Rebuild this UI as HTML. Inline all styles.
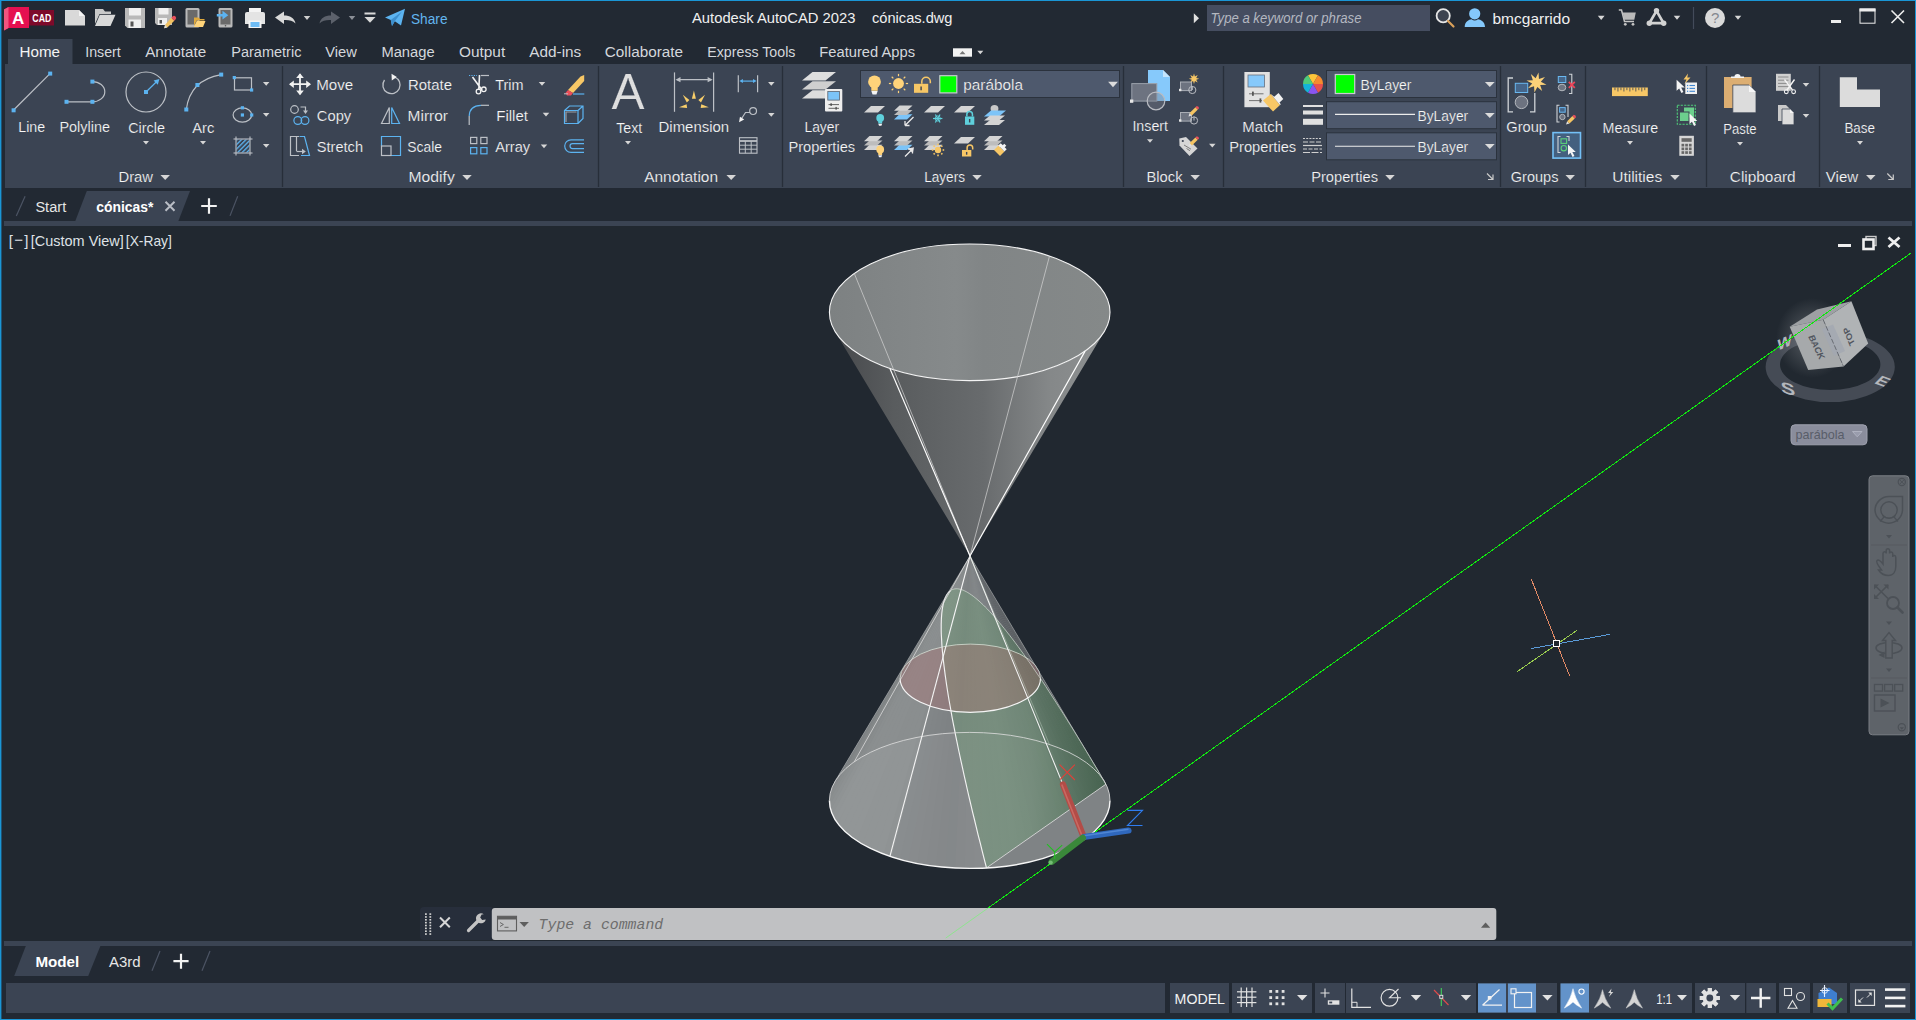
<!DOCTYPE html>
<html><head><meta charset="utf-8"><title>Autodesk AutoCAD 2023 - cónicas.dwg</title>
<style>
html,body{margin:0;padding:0;background:#222933;overflow:hidden}
body{width:1916px;height:1020px;position:relative}
svg{position:absolute;left:0;top:0;display:block}
text{font-family:"Liberation Sans",sans-serif;white-space:pre}
</style></head><body>
<svg width="1916" height="1020" viewBox="0 0 1916 1020">
<rect x="0" y="0" width="1916" height="1020" fill="#222933" />
<rect x="8" y="39" width="64.5" height="26" fill="#3b4453" />
<rect x="5" y="64" width="1906" height="124" fill="#3b4453" />
<line x1="282.5" y1="66" x2="282.5" y2="187" stroke="#272e39" stroke-width="1.3" />
<line x1="598.5" y1="66" x2="598.5" y2="187" stroke="#272e39" stroke-width="1.3" />
<line x1="782.5" y1="66" x2="782.5" y2="187" stroke="#272e39" stroke-width="1.3" />
<line x1="1123.5" y1="66" x2="1123.5" y2="187" stroke="#272e39" stroke-width="1.3" />
<line x1="1223.5" y1="66" x2="1223.5" y2="187" stroke="#272e39" stroke-width="1.3" />
<line x1="1500.5" y1="66" x2="1500.5" y2="187" stroke="#272e39" stroke-width="1.3" />
<line x1="1585.5" y1="66" x2="1585.5" y2="187" stroke="#272e39" stroke-width="1.3" />
<line x1="1706.5" y1="66" x2="1706.5" y2="187" stroke="#272e39" stroke-width="1.3" />
<line x1="1819.5" y1="66" x2="1819.5" y2="187" stroke="#272e39" stroke-width="1.3" />
<rect x="4" y="221" width="1908" height="5" fill="#3b4453" />
<path d="M86.8 191H190L178.4 221H75.3z" fill="#3b4453" />
<rect x="2" y="226" width="1913" height="715" fill="#212830" />
<rect x="4" y="941" width="1908" height="5" fill="#3b4453" />
<path d="M25.8 946H100.4L88.2 976H14.2z" fill="#3b4453" />
<rect x="6" y="983" width="1159" height="30" fill="#3b4453" />
<rect x="0" y="0" width="1916" height="1" fill="#1a96d6" />
<rect x="0" y="0" width="1.4" height="1020" fill="#1a96d6" />
<rect x="1915" y="0" width="1" height="1020" fill="#1a96d6" />
<rect x="0" y="1019" width="1916" height="1" fill="#1a96d6" />
<path d="M4 9.5L8.5 7H29V28H8.5L4 30.5z" fill="#e51050" />
<path d="M4 9.5L8.5 7V28L4 30.5z" fill="#f0557f" />
<rect x="29" y="10" width="25" height="15.5" fill="#7d0a2a" />
<text x="12" y="24.3" font-size="17" fill="#fff" font-weight="bold" >A</text>
<text x="32.3" y="21.8" font-size="10" fill="#fff" font-weight="bold" textLength="19.0" lengthAdjust="spacingAndGlyphs" >CAD</text>
<path d="M65 10H79L85 16V25.5H65z" fill="#d9d9d9" />
<path d="M79 10V16H85z" fill="#f4f4f4" />
<path d="M95 9H103L105 11.5H111V14H99.5L95 24z" fill="#c9c9c9" />
<path d="M99.8 14.8H115.5L110.5 26H95z" fill="#d9d9d9" />
<path d="M125 8H145V28H127.5L125 25.5z" fill="#b9b9b9" />
<rect x="129" y="8" width="12" height="7.5" fill="#f0f0f0" />
<rect x="128.5" y="19.5" width="12.5" height="8.5" fill="#f0f0f0" />
<rect x="130.5" y="21.5" width="3" height="5" fill="#555" />
<path d="M155 8H172V25H157L155 23z" fill="#b9b9b9" />
<rect x="158.5" y="8" width="10" height="6.5" fill="#f0f0f0" />
<rect x="158" y="18" width="9" height="7" fill="#f0f0f0" />
<rect x="159.5" y="20" width="2.5" height="3.5" fill="#555" />
<path d="M171.3 17.8L174.3 20.8L167.6 27.3L164.2 28.3L165 25z" fill="#f2c262" />
<path d="M171.3 17.8L172.5 16.6a2.1 2.1 0 0 1 3 3L174.3 20.8z" fill="#e8505b" />
<path d="M164.2 28.3L165 25L167.4 27.4z" fill="#ddd" />
<rect x="185.5" y="8" width="14" height="19.5" fill="#b9b9b9" rx="1.5"/>
<rect x="187.5" y="10" width="10" height="14.5" fill="#6a6a6a" />
<path d="M194 17.5H198.5L200 19H204.5V20.5H196.5L194 26z" fill="#e0a93c" />
<path d="M196.8 21H205.5L203 27H194z" fill="#ffd47a" />
<rect x="218.5" y="8" width="14" height="19.5" fill="#b9b9b9" rx="1.5"/>
<rect x="220.5" y="10" width="10" height="14.5" fill="#6a6a6a" />
<circle cx="225.5" cy="25.8" r="0.8" fill="#555" />
<path d="M216.8 13.9H222.5V10.8L228.3 15.2L222.5 19.6V16.5H216.8z" fill="#5cb3f0" />
<rect x="249" y="8" width="12" height="6" fill="#f4f4f4" />
<path d="M245 14a2 2 0 0 1 2 -2H263a2 2 0 0 1 2 2V24H245z" fill="#e4e4e4" />
<rect x="248.5" y="20.5" width="13" height="7.5" fill="#f4f4f4" />
<rect x="250.5" y="22" width="9" height="5" fill="#6ebcf5" />
<path d="M275 17.5L284 11.5V15.5C290 15.5 294.5 18 295.5 23.5C292.5 20.5 289 19.8 284 20V24z" fill="#d9d9d9" />
<path d="M303.75 16.0h6.5l-3.25 4z" fill="#cfcfcf"/>
<path d="M340 17.5L331 11.5V15.5C325 15.5 320.5 18 319.5 23.5C322.5 20.5 326 19.8 331 20V24z" fill="#5c616b" />
<path d="M348.75 16.0h6.5l-3.25 4z" fill="#8b8f97"/>
<rect x="364.5" y="12.5" width="11" height="2" fill="#d9d9d9" />
<path d="M364.5 17H375.5L370 22.8z" fill="#d9d9d9" />
<path d="M385 17.5L405 8.8L401 25.5L394.8 21.2L392 26L390.8 20z" fill="#5cb3f0" />
<path d="M390.8 20L402 11.5L394.8 21.2L392 26z" fill="#3d8fce" />
<text x="411" y="24" font-size="15.5" fill="#62b6f0" textLength="36.5" lengthAdjust="spacingAndGlyphs" >Share</text>
<text x="692" y="22.8" font-size="15" fill="#f0f0f0" textLength="163.5" lengthAdjust="spacingAndGlyphs" >Autodesk AutoCAD 2023</text>
<text x="872" y="22.8" font-size="15" fill="#f0f0f0" textLength="80.5" lengthAdjust="spacingAndGlyphs" >cónicas.dwg</text>
<path d="M1193.8 13.3L1199 18.2L1193.8 23.2z" fill="#e0e0e0" />
<rect x="1207" y="5" width="223" height="26" fill="#454d60" />
<text x="1210.5" y="22.7" font-size="14" fill="#b4b8c0" font-style="italic" textLength="151.0" lengthAdjust="spacingAndGlyphs" >Type a keyword or phrase</text>
<circle cx="1443.2" cy="15.8" r="6.6" fill="#3d4350" stroke="#e6e6e6" stroke-width="1.8" />
<line x1="1448" y1="21" x2="1453.5" y2="26.5" stroke="#d9a05a" stroke-width="2.2" stroke-linecap="round"/>
<circle cx="1474.7" cy="13.8" r="5.6" fill="#84c8fb" />
<path d="M1464.7 27C1464.7 21.5 1469 19.5 1471.5 19.2Q1474.7 21.6 1478 19.2C1480.5 19.5 1485 21.5 1485 27z" fill="#84c8fb" />
<text x="1492.5" y="23.8" font-size="15" fill="#f0f0f0" textLength="77.5" lengthAdjust="spacingAndGlyphs" >bmcgarrido</text>
<path d="M1597.8 15.700000000000001h6.8l-3.4 4.2z" fill="#d6d6d6"/>
<path d="M1618.8 10H1621.5L1624.5 21.5H1634" fill="None" stroke="#c4c4c4" stroke-width="1.5" />
<path d="M1622.5 12.5H1635.8L1634.3 19.8H1624.3z" fill="#b9b9b9" />
<circle cx="1625.3" cy="24.3" r="1.4" fill="#c4c4c4" />
<circle cx="1633" cy="24.3" r="1.4" fill="#c4c4c4" />
<path d="M1656.5 10.8L1649.4 23.2H1663.6z" fill="None" stroke="#d2d2d2" stroke-width="2.7" stroke-linejoin="round"/>
<circle cx="1656.5" cy="10.6" r="2.7" fill="#d2d2d2" />
<circle cx="1649.3" cy="23.2" r="2.7" fill="#d2d2d2" />
<circle cx="1663.7" cy="23.2" r="2.7" fill="#d2d2d2" />
<path d="M1673.75 15.8h6.5l-3.25 4z" fill="#d6d6d6"/>
<line x1="1693.5" y1="7" x2="1693.5" y2="29" stroke="#434b5a" stroke-width="1.2" />
<circle cx="1715" cy="18" r="10" fill="#dadada" />
<text x="1710.9" y="23.4" font-size="15" fill="#85888f" >?</text>
<path d="M1734.75 15.8h6.5l-3.25 4z" fill="#d6d6d6"/>
<rect x="1831" y="20" width="10" height="3" fill="#ededed" />
<rect x="1860" y="9" width="15" height="14.2" fill="none" stroke="#ededed" stroke-width="1"/>
<rect x="1859.5" y="8.5" width="16" height="3" fill="#ededed" />
<path d="M1891.5 10.5L1904 23M1904 10.5L1891.5 23" fill="None" stroke="#ededed" stroke-width="1.6" />
<text x="19.5" y="57" font-size="15.5" fill="#f4f4f4" textLength="40.5" lengthAdjust="spacingAndGlyphs" >Home</text>
<text x="85.2" y="57" font-size="15.5" fill="#d4d7dc" textLength="35.6" lengthAdjust="spacingAndGlyphs" >Insert</text>
<text x="145.2" y="57" font-size="15.5" fill="#d4d7dc" textLength="61.0" lengthAdjust="spacingAndGlyphs" >Annotate</text>
<text x="231.3" y="57" font-size="15.5" fill="#d4d7dc" textLength="70.1" lengthAdjust="spacingAndGlyphs" >Parametric</text>
<text x="325.2" y="57" font-size="15.5" fill="#d4d7dc" textLength="31.6" lengthAdjust="spacingAndGlyphs" >View</text>
<text x="381.4" y="57" font-size="15.5" fill="#d4d7dc" textLength="53.2" lengthAdjust="spacingAndGlyphs" >Manage</text>
<text x="459" y="57" font-size="15.5" fill="#d4d7dc" textLength="46.2" lengthAdjust="spacingAndGlyphs" >Output</text>
<text x="529.3" y="57" font-size="15.5" fill="#d4d7dc" textLength="52.0" lengthAdjust="spacingAndGlyphs" >Add-ins</text>
<text x="604.8" y="57" font-size="15.5" fill="#d4d7dc" textLength="78.2" lengthAdjust="spacingAndGlyphs" >Collaborate</text>
<text x="707.3" y="57" font-size="15.5" fill="#d4d7dc" textLength="88.1" lengthAdjust="spacingAndGlyphs" >Express Tools</text>
<text x="819.3" y="57" font-size="15.5" fill="#d4d7dc" textLength="95.7" lengthAdjust="spacingAndGlyphs" >Featured Apps</text>
<rect x="953" y="48.3" width="19" height="8.4" fill="#f2f2f2" />
<path d="M959.5 54.3h6l-3 -3.2z" fill="#777" />
<path d="M977.3 50.7h6l-3.0 3.6z" fill="#d6d6d6"/>
<line x1="13.6" y1="110" x2="50" y2="73.6" stroke="#bcc0c6" stroke-width="1.2" />
<rect x="11.6" y="108.3" width="4" height="4" fill="#5cb3f0" />
<rect x="48.2" y="71.6" width="4" height="4" fill="#5cb3f0" />
<path d="M66.5 101.8H92.4A12.4 10.1 0 0 0 92.4 81.6" fill="None" stroke="#bcc0c6" stroke-width="1.2" />
<rect x="64.5" y="99.8" width="4" height="4" fill="#5cb3f0" />
<rect x="90.4" y="99.8" width="4" height="4" fill="#5cb3f0" />
<rect x="90.4" y="79.6" width="4" height="4" fill="#5cb3f0" />
<circle cx="146" cy="92" r="20" fill="none" stroke="#bcc0c6" stroke-width="1.2" />
<rect x="144.0" y="90.0" width="4" height="4" fill="#5cb3f0" />
<line x1="146" y1="92" x2="157" y2="81.2" stroke="#5cb3f0" stroke-width="1.2" />
<path d="M159.4 79L153.6 80.6L157.8 84.8z" fill="#5cb3f0" />
<path d="M186.3 109.5Q190 80 221.2 74.6" fill="None" stroke="#bcc0c6" stroke-width="1.2" />
<rect x="184.3" y="107.5" width="4" height="4" fill="#5cb3f0" />
<rect x="195.4" y="83.0" width="4" height="4" fill="#5cb3f0" />
<rect x="219.2" y="72.6" width="4" height="4" fill="#5cb3f0" />
<rect x="234.5" y="77.8" width="17" height="12.2" fill="none" stroke="#bcc0c6" stroke-width="1.2"/>
<rect x="232.70000000000002" y="76.0" width="3.2" height="3.2" fill="#5cb3f0" />
<rect x="250.0" y="88.4" width="3.2" height="3.2" fill="#5cb3f0" />
<ellipse cx="242.4" cy="115" rx="9.3" ry="7.2" fill="none" stroke="#bcc0c6" stroke-width="1.2" />
<rect x="240.8" y="106.2" width="3.2" height="3.2" fill="#5cb3f0" />
<rect x="240.8" y="113.4" width="3.2" height="3.2" fill="#5cb3f0" />
<rect x="250.1" y="113.4" width="3.2" height="3.2" fill="#5cb3f0" />
<defs><pattern id="hat" width="3.2" height="3.2" patternUnits="userSpaceOnUse" patternTransform="rotate(-45)"><rect width="3.2" height="1.3" fill="#5cb3f0"/></pattern></defs>
<rect x="236.5" y="139.5" width="13" height="13" fill="url(#hat)" />
<line x1="236" y1="136.5" x2="236" y2="155.5" stroke="#bcc0c6" stroke-width="1.1" />
<line x1="250" y1="136.5" x2="250" y2="155.5" stroke="#bcc0c6" stroke-width="1.1" />
<line x1="233.5" y1="139" x2="252.5" y2="139" stroke="#bcc0c6" stroke-width="1.1" />
<line x1="233.5" y1="153" x2="252.5" y2="153" stroke="#bcc0c6" stroke-width="1.1" />
<path d="M262.95 81.89999999999999h6.5l-3.25 3.8z" fill="#d6d6d6"/>
<path d="M262.95 112.89999999999999h6.5l-3.25 3.8z" fill="#d6d6d6"/>
<path d="M262.95 143.9h6.5l-3.25 3.8z" fill="#d6d6d6"/>
<text x="18.3" y="132" font-size="15.5" fill="#f8f8f8" stroke="#3b4453" stroke-width="0.2" textLength="26.9" lengthAdjust="spacingAndGlyphs" >Line</text>
<text x="59.4" y="132" font-size="15.5" fill="#f8f8f8" stroke="#3b4453" stroke-width="0.2" textLength="50.6" lengthAdjust="spacingAndGlyphs" >Polyline</text>
<text x="128.2" y="133" font-size="15.5" fill="#f8f8f8" stroke="#3b4453" stroke-width="0.2" textLength="36.8" lengthAdjust="spacingAndGlyphs" >Circle</text>
<text x="192.2" y="133" font-size="15.5" fill="#f8f8f8" stroke="#3b4453" stroke-width="0.2" textLength="22.1" lengthAdjust="spacingAndGlyphs" >Arc</text>
<path d="M143.0 141.0h6l-3.0 3.6z" fill="#d6d6d6"/>
<path d="M200.0 141.0h6l-3.0 3.6z" fill="#d6d6d6"/>
<text x="118.5" y="181.5" font-size="15.5" fill="#f8f8f8" stroke="#3b4453" stroke-width="0.2" textLength="34.5" lengthAdjust="spacingAndGlyphs" >Draw</text>
<path d="M160.45 175.0h9.5l-4.75 5z" fill="#d6d6d6"/>
<path d="M300 74.2V94.2M290 84.2H310" fill="None" stroke="#f2f2f2" stroke-width="1.8" />
<path d="M300 73.2L296.2 78L303.8 78z" fill="#f2f2f2" />
<path d="M300 95.2L296.2 90.4L303.8 90.4z" fill="#f2f2f2" />
<path d="M289 84.2L293.8 80.4L293.8 88z" fill="#f2f2f2" />
<path d="M311 84.2L306.2 80.4L306.2 88z" fill="#f2f2f2" />
<text x="316.2" y="90" font-size="15.5" fill="#f8f8f8" stroke="#3b4453" stroke-width="0.2" textLength="37.0" lengthAdjust="spacingAndGlyphs" >Move</text>
<circle cx="294.5" cy="109.5" r="3.8" fill="none" stroke="#bcc0c6" stroke-width="1.2" />
<circle cx="297.8" cy="120.5" r="3.9" fill="none" stroke="#5cb3f0" stroke-width="1.2" />
<circle cx="305" cy="120.5" r="3.9" fill="none" stroke="#5cb3f0" stroke-width="1.2" />
<path d="M300.5 107H305.5V111.5" fill="None" stroke="#bcc0c6" stroke-width="1.2" />
<path d="M303 110.5h5l-2.5 3.5z" fill="#bcc0c6" />
<text x="316.8" y="120.5" font-size="15.5" fill="#f8f8f8" stroke="#3b4453" stroke-width="0.2" textLength="34.4" lengthAdjust="spacingAndGlyphs" >Copy</text>
<path d="M299 136.5H290.5V155.5H299" fill="None" stroke="#bcc0c6" stroke-width="1.2" />
<path d="M299.5 136.5H304.5L309.5 155.5H301" fill="None" stroke="#5cb3f0" stroke-width="1.2" />
<line x1="296.5" y1="137" x2="296.5" y2="151" stroke="#bcc0c6" stroke-width="1.2" />
<line x1="296.5" y1="151.5" x2="303" y2="151.5" stroke="#bcc0c6" stroke-width="1.2" />
<path d="M302 148.8l3.8 2.7l-3.8 2.7z" fill="#bcc0c6" />
<text x="316.8" y="151.5" font-size="15.5" fill="#f8f8f8" stroke="#3b4453" stroke-width="0.2" textLength="46.2" lengthAdjust="spacingAndGlyphs" >Stretch</text>
<path d="M394.5 77A8.6 8.6 0 1 1 384.5 80" fill="None" stroke="#bcc0c6" stroke-width="1.3" />
<path d="M391.5 73.8L396.8 77L391.8 80.6z" fill="#f2f2f2" />
<text x="408" y="90" font-size="15.5" fill="#f8f8f8" stroke="#3b4453" stroke-width="0.2" textLength="44" lengthAdjust="spacingAndGlyphs" >Rotate</text>
<path d="M389.3 107.5V123.5H381.5z" fill="None" stroke="#bcc0c6" stroke-width="1.2" />
<path d="M391.7 107.5V123.5H399.5z" fill="None" stroke="#5cb3f0" stroke-width="1.2" />
<text x="407.6" y="120.5" font-size="15.5" fill="#f8f8f8" stroke="#3b4453" stroke-width="0.2" textLength="40.4" lengthAdjust="spacingAndGlyphs" >Mirror</text>
<path d="M381.5 146V136.5H400.5V155.5H391" fill="None" stroke="#5cb3f0" stroke-width="1.2" />
<rect x="381.5" y="146" width="9.5" height="9.5" fill="none" stroke="#bcc0c6" stroke-width="1.2"/>
<text x="407.2" y="151.5" font-size="15.5" fill="#f8f8f8" stroke="#3b4453" stroke-width="0.2" textLength="34.8" lengthAdjust="spacingAndGlyphs" >Scale</text>
<line x1="469" y1="75.5" x2="477" y2="75.5" stroke="#5cb3f0" stroke-width="1" stroke-dasharray="1.2 1.2"/>
<line x1="481" y1="75.5" x2="489" y2="75.5" stroke="#bcc0c6" stroke-width="1.2" />
<path d="M472.5 77L482 90M479.5 75L478.8 90" fill="None" stroke="#f2f2f2" stroke-width="1.6" />
<circle cx="478.5" cy="91.5" r="2.3" fill="none" stroke="#f2f2f2" stroke-width="1.3" />
<circle cx="483.8" cy="89.3" r="2.3" fill="none" stroke="#f2f2f2" stroke-width="1.3" />
<text x="495.2" y="90" font-size="15.5" fill="#f8f8f8" stroke="#3b4453" stroke-width="0.2" textLength="28.3" lengthAdjust="spacingAndGlyphs" >Trim</text>
<path d="M538.75 81.89999999999999h6.5l-3.25 3.8z" fill="#d6d6d6"/>
<path d="M469.2 125V116" fill="None" stroke="#bcc0c6" stroke-width="1.2" />
<path d="M469.2 116Q469.5 105.5 481 105.3" fill="None" stroke="#5cb3f0" stroke-width="1.2" />
<path d="M481 105.3H489" fill="None" stroke="#bcc0c6" stroke-width="1.2" />
<text x="496.2" y="120.5" font-size="15.5" fill="#f8f8f8" stroke="#3b4453" stroke-width="0.2" textLength="31.8" lengthAdjust="spacingAndGlyphs" >Fillet</text>
<path d="M542.75 112.69999999999999h6.5l-3.25 3.8z" fill="#d6d6d6"/>
<rect x="470.6" y="137.4" width="6.2" height="6.2" fill="none" stroke="#bcc0c6" stroke-width="1.2"/>
<rect x="480.8" y="137.4" width="6.2" height="6.2" fill="none" stroke="#bcc0c6" stroke-width="1.2"/>
<rect x="470.6" y="147.6" width="6.2" height="6.2" fill="none" stroke="#5cb3f0" stroke-width="1.2"/>
<rect x="480.8" y="147.6" width="6.2" height="6.2" fill="none" stroke="#5cb3f0" stroke-width="1.2"/>
<text x="495.2" y="151.5" font-size="15.5" fill="#f8f8f8" stroke="#3b4453" stroke-width="0.2" textLength="35.0" lengthAdjust="spacingAndGlyphs" >Array</text>
<path d="M540.75 144.5h6.5l-3.25 3.8z" fill="#d6d6d6"/>
<path d="M568 90L580.5 76.5L584.2 75V81L573 93z" fill="#f7c766" />
<path d="M568 90L573 93L571 95.5H567L565.5 93z" fill="#ea4e5a" />
<line x1="564" y1="93.8" x2="568" y2="93.8" stroke="#bcc0c6" stroke-width="1" />
<line x1="573" y1="94" x2="584.3" y2="94" stroke="#5cb3f0" stroke-width="1.2" />
<path d="M564.5 110.5H578V123.5H564.5zM564.5 110.5L569.5 106H583V118.5L578 123.5M578 110.5L583 106" fill="None" stroke="#5cb3f0" stroke-width="1.2" />
<path d="M566 122V112H576.5" fill="None" stroke="#9a9ea6" stroke-width="1.2" />
<path d="M584 139.8H571A6.3 6.3 0 0 0 571 152.4H584M584 143.6H572.5A2.5 2.5 0 0 0 572.5 148.6H584" fill="None" stroke="#5cb3f0" stroke-width="1.2" />
<text x="408.5" y="181.5" font-size="15.5" fill="#f8f8f8" stroke="#3b4453" stroke-width="0.2" textLength="46.3" lengthAdjust="spacingAndGlyphs" >Modify</text>
<path d="M462.25 175.0h9.5l-4.75 5z" fill="#d6d6d6"/>
<text x="611.5" y="109.3" font-size="49.5" fill="#dedede" stroke="#3b4453" stroke-width="0.2" >A</text>
<text x="616.2" y="132.6" font-size="15.5" fill="#f8f8f8" stroke="#3b4453" stroke-width="0.2" textLength="26.0" lengthAdjust="spacingAndGlyphs" >Text</text>
<path d="M625.0 141.0h6l-3.0 3.6z" fill="#d6d6d6"/>
<line x1="674.5" y1="72.4" x2="674.5" y2="111.8" stroke="#bcc0c6" stroke-width="1.2" />
<line x1="713.6" y1="72.4" x2="713.6" y2="111.8" stroke="#bcc0c6" stroke-width="1.2" />
<line x1="677" y1="79.7" x2="711" y2="79.7" stroke="#bcc0c6" stroke-width="1.2" />
<path d="M675.5 79.7l5 -2.6v5.2z" fill="#bcc0c6" />
<path d="M712.6 79.7l-5 -2.6v5.2z" fill="#bcc0c6" />
<path d="M693.9 90.5l2 8.2h-4z" fill="#f9cf6a" />
<path d="M682.8 94.8l6.6 5.2l-2.6 2.6z" fill="#f9cf6a" />
<path d="M705 94.8l-6.6 5.2l2.6 2.6z" fill="#f9cf6a" />
<path d="M679 107.2l7.6 -3l.5 3.8z" fill="#f9cf6a" />
<path d="M708.8 107.2l-7.6 -3l-.5 3.8z" fill="#f9cf6a" />
<text x="658.5" y="132" font-size="15.5" fill="#f8f8f8" stroke="#3b4453" stroke-width="0.2" textLength="70.7" lengthAdjust="spacingAndGlyphs" >Dimension</text>
<line x1="738.3" y1="75.2" x2="738.3" y2="92.2" stroke="#bcc0c6" stroke-width="1.2" />
<line x1="757.6" y1="75.2" x2="757.6" y2="92.2" stroke="#bcc0c6" stroke-width="1.2" />
<line x1="741" y1="81.1" x2="755" y2="81.1" stroke="#5cb3f0" stroke-width="1.2" />
<path d="M739.3 81.1l3.6 -2v4z" fill="#5cb3f0" />
<path d="M756.6 81.1l-3.6 -2v4z" fill="#5cb3f0" />
<path d="M768.05 81.89999999999999h6.5l-3.25 3.8z" fill="#d6d6d6"/>
<circle cx="753.1" cy="111.1" r="3.4" fill="none" stroke="#bcc0c6" stroke-width="1.2" />
<path d="M750 112.5H745.5L741 119.5" fill="None" stroke="#bcc0c6" stroke-width="1.2" />
<path d="M739 122.3L740 116.8L744.2 119.6z" fill="#f2f2f2" />
<path d="M768.05 112.89999999999999h6.5l-3.25 3.8z" fill="#d6d6d6"/>
<rect x="739.5" y="137.7" width="17.5" height="15.5" fill="none" stroke="#bcc0c6" stroke-width="1.1"/>
<line x1="739.5" y1="141" x2="757" y2="141" stroke="#bcc0c6" stroke-width="1.8" />
<line x1="739.5" y1="145.2" x2="757" y2="145.2" stroke="#bcc0c6" stroke-width="1" />
<line x1="739.5" y1="149.2" x2="757" y2="149.2" stroke="#bcc0c6" stroke-width="1" />
<line x1="745.3" y1="141" x2="745.3" y2="153.2" stroke="#bcc0c6" stroke-width="1" />
<line x1="751.2" y1="141" x2="751.2" y2="153.2" stroke="#bcc0c6" stroke-width="1" />
<text x="644.2" y="181.5" font-size="15.5" fill="#f8f8f8" stroke="#3b4453" stroke-width="0.2" textLength="73.8" lengthAdjust="spacingAndGlyphs" >Annotation</text>
<path d="M726.45 175.0h9.5l-4.75 5z" fill="#d6d6d6"/>
<rect x="860.5" y="70.5" width="259" height="27" fill="#4e596d" stroke="#2b323d" stroke-width="1"/>
<circle cx="874.5" cy="81.8" r="6.4" fill="#ffd37a" />
<rect x="871.3" y="86.6" width="6.4" height="4.16" fill="#ffd37a" />
<path d="M871.3 91.08h6.4l-1.2800000000000002 3.5200000000000005h-3.84z" fill="#f4f4f4" />
<circle cx="898.5" cy="83.5" r="5.4" fill="#ffd37a" />
<line x1="905.8" y1="83.5" x2="908.1" y2="83.5" stroke="#ffd37a" stroke-width="1.2" />
<line x1="903.66" y1="88.66" x2="905.29" y2="90.29" stroke="#ffd37a" stroke-width="1.2" />
<line x1="898.5" y1="90.8" x2="898.5" y2="93.1" stroke="#ffd37a" stroke-width="1.2" />
<line x1="893.34" y1="88.66" x2="891.71" y2="90.29" stroke="#ffd37a" stroke-width="1.2" />
<line x1="891.2" y1="83.5" x2="888.9" y2="83.5" stroke="#ffd37a" stroke-width="1.2" />
<line x1="893.34" y1="78.34" x2="891.71" y2="76.71" stroke="#ffd37a" stroke-width="1.2" />
<line x1="898.5" y1="76.2" x2="898.5" y2="73.9" stroke="#ffd37a" stroke-width="1.2" />
<line x1="903.66" y1="78.34" x2="905.29" y2="76.71" stroke="#ffd37a" stroke-width="1.2" />
<rect x="914" y="83.8" width="14.2" height="9" fill="#f7c766" />
<rect x="920.4" y="86.5" width="1.4" height="3.78" fill="#3b4453" />
<path d="M921.81 83.8v-2.2a4.26 4.26 0 0 1 8.52 0v1.6" fill="None" stroke="#f7c766" stroke-width="1.5" />
<rect x="939.8" y="75.7" width="17" height="17.2" fill="#00ff00" stroke="#c9ccd0" stroke-width="1.2"/>
<text x="963.3" y="90" font-size="15.5" fill="#f8f8f8" stroke="#3b4453" stroke-width="0.2" textLength="59.7" lengthAdjust="spacingAndGlyphs" >parábola</text>
<path d="M1108.1 81.8h9.8l-4.9 5.4z" fill="#dcdcdc"/>
<path d="M871 106.0H885L878 112.5H864z" fill="#d4d4d4" />
<circle cx="880.2" cy="118.0" r="3.9" fill="#5fd0dc" />
<rect x="878.25" y="120.925" width="3.9" height="2.535" fill="#5fd0dc" />
<path d="M878.25 123.655h3.9l-0.78 2.145h-2.34z" fill="#f4f4f4" />
<path d="M899.5 114.3H912.5L907 119.5H894z" fill="#7cc4f8" />
<path d="M899.5 109.9H912.5L907 115.10000000000001H894z" fill="#bdbdbd" />
<path d="M899.5 105.5H912.5L907 110.7H894z" fill="#d4d4d4" />
<path d="M913.5 117L905 125.5M905 125.5v-4.5M905 125.5h4.5" fill="None" stroke="#e8e8e8" stroke-width="1.3" />
<path d="M931 106.0H945L938 112.5H924z" fill="#d4d4d4" />
<line x1="933" y1="118.5" x2="942.4" y2="118.5" stroke="#5fd0dc" stroke-width="1.2" transform="rotate(0 937.7 118.5)"/>
<line x1="933" y1="118.5" x2="942.4" y2="118.5" stroke="#5fd0dc" stroke-width="1.2" transform="rotate(60 937.7 118.5)"/>
<line x1="933" y1="118.5" x2="942.4" y2="118.5" stroke="#5fd0dc" stroke-width="1.2" transform="rotate(120 937.7 118.5)"/>
<circle cx="937.7" cy="118.5" r="2.6" fill="none" stroke="#5fd0dc" stroke-width="0.9" />
<path d="M961 106.0H975L968 112.5H954z" fill="#d4d4d4" />
<rect x="965" y="116.5" width="9.3" height="8.3" fill="#5fd0dc" />
<rect x="968.9499999999999" y="118.99" width="1.4" height="3.486" fill="#3b4453" />
<path d="M966.86 116.5v-2.2a2.79 2.79 0 0 1 5.58 0v2.2" fill="None" stroke="#5fd0dc" stroke-width="1.5" />
<ellipse cx="994.5" cy="108.8" rx="3.9" ry="3.7" fill="#c9c9c9" />
<path d="M991 110.5H1006L999 116.5H984z" fill="#7cc4f8" />
<path d="M990 115.5H1005L999 120.5H984z" fill="#d4d4d4" />
<path d="M990 120H1005L999 125H984z" fill="#d4d4d4" />
<path d="M869.5 144.8H882.5L877 150.0H864z" fill="#d4d4d4" />
<path d="M869.5 140.4H882.5L877 145.6H864z" fill="#bdbdbd" />
<path d="M869.5 136.0H882.5L877 141.2H864z" fill="#d4d4d4" />
<circle cx="880.2" cy="149.5" r="3.9" fill="#ffd37a" />
<rect x="878.25" y="152.425" width="3.9" height="2.535" fill="#ffd37a" />
<path d="M878.25 155.155h3.9l-0.78 2.145h-2.34z" fill="#f4f4f4" />
<path d="M899.5 144.8H912.5L907 150.0H894z" fill="#7cc4f8" />
<path d="M899.5 140.4H912.5L907 145.6H894z" fill="#bdbdbd" />
<path d="M899.5 136.0H912.5L907 141.2H894z" fill="#d4d4d4" />
<path d="M905 156.5L912.5 149M912.5 149v4.5M912.5 149h-4.5" fill="None" stroke="#e8e8e8" stroke-width="1.3" />
<path d="M914 147.2l-6 1.2l4.8 4.8z" fill="#e8e8e8" />
<path d="M929.5 144.8H942.5L937 150.0H924z" fill="#d4d4d4" />
<path d="M929.5 140.4H942.5L937 145.6H924z" fill="#bdbdbd" />
<path d="M929.5 136.0H942.5L937 141.2H924z" fill="#d4d4d4" />
<circle cx="938" cy="150" r="3.2" fill="#f7c766" />
<line x1="942.6" y1="150.0" x2="944.2" y2="150.0" stroke="#f7c766" stroke-width="1.6" />
<line x1="941.25" y1="153.25" x2="942.38" y2="154.38" stroke="#f7c766" stroke-width="1.6" />
<line x1="938.0" y1="154.6" x2="938.0" y2="156.2" stroke="#f7c766" stroke-width="1.6" />
<line x1="934.75" y1="153.25" x2="933.62" y2="154.38" stroke="#f7c766" stroke-width="1.6" />
<line x1="933.4" y1="150.0" x2="931.8" y2="150.0" stroke="#f7c766" stroke-width="1.6" />
<line x1="934.75" y1="146.75" x2="933.62" y2="145.62" stroke="#f7c766" stroke-width="1.6" />
<line x1="938.0" y1="145.4" x2="938.0" y2="143.8" stroke="#f7c766" stroke-width="1.6" />
<line x1="941.25" y1="146.75" x2="942.38" y2="145.62" stroke="#f7c766" stroke-width="1.6" />
<path d="M961 137H975L968 143.5H954z" fill="#d4d4d4" />
<rect x="962" y="150" width="9.3" height="6.5" fill="#f7c766" />
<rect x="965.9499999999999" y="151.95" width="1.4" height="2.73" fill="#3b4453" />
<path d="M967.115 150v-2.2a2.79 2.79 0 0 1 5.58 0v1.6" fill="None" stroke="#f7c766" stroke-width="1.5" />
<path d="M989.5 144.8H1002.5L997 150.0H984z" fill="#d4d4d4" />
<path d="M989.5 140.4H1002.5L997 145.6H984z" fill="#bdbdbd" />
<path d="M989.5 136.0H1002.5L997 141.2H984z" fill="#d4d4d4" />
<path d="M994 150l4.5 -4.5l6 6l-4.5 4.5z" fill="#f7c766" />
<path d="M998.5 145.5l2.2 -2.2l2 2l1.6 -1.6l2 2l-1.6 1.6l2 2l-2.2 2.2z" fill="#f4f4f4" />
<text x="924.2" y="181.5" font-size="15.5" fill="#f8f8f8" stroke="#3b4453" stroke-width="0.2" textLength="40.8" lengthAdjust="spacingAndGlyphs" >Layers</text>
<path d="M972.25 175.0h9.5l-4.75 5z" fill="#d6d6d6"/>
<path d="M812.5 90.2H836.0L825.5 98.4H802z" fill="#dcdcdc" />
<path d="M812.5 81.2H836.0L825.5 89.4H802z" fill="#cfcfcf" />
<path d="M812.5 72H836.0L825.5 80.4H802z" fill="#dedede" />
<path d="M802 78.4h23l10.5 -6.4" fill="None" stroke="none" stroke-width="1" />
<rect x="825" y="89" width="17.3" height="22.6" fill="#eeeeee" rx="1"/>
<rect x="827.8" y="91.5" width="11.6" height="8.6" fill="#7cc4f8" stroke="#5b6470" stroke-width="0.8"/>
<line x1="828.5" y1="104.6" x2="839" y2="104.6" stroke="#555" stroke-width="0.9" />
<line x1="828.5" y1="108.3" x2="839" y2="108.3" stroke="#555" stroke-width="0.9" />
<rect x="830.5" y="103.2" width="1.2" height="2.8" fill="#444" />
<rect x="835.5" y="106.9" width="1.2" height="2.8" fill="#444" />
<text x="804.4" y="132" font-size="15.5" fill="#f8f8f8" stroke="#3b4453" stroke-width="0.2" textLength="34.8" lengthAdjust="spacingAndGlyphs" >Layer</text>
<text x="788.4" y="151.8" font-size="15.5" fill="#f8f8f8" stroke="#3b4453" stroke-width="0.2" textLength="66.8" lengthAdjust="spacingAndGlyphs" >Properties</text>
<path d="M1148 70H1163L1170 77V101H1148z" fill="#86c9fb" />
<path d="M1163 70V77H1170z" fill="#c5e5fd" />
<rect x="1131.8" y="83.6" width="25" height="17.5" fill="#6d7380" stroke="#9aa0aa" stroke-width="1"/>
<circle cx="1156" cy="101" r="8.8" fill="#7a808c66" stroke="#b9bcc2" stroke-width="1.2" />
<rect x="1130" y="99.5" width="3.3" height="3.3" fill="#e6e6e6" />
<text x="1132.4" y="130.6" font-size="15.5" fill="#f8f8f8" stroke="#3b4453" stroke-width="0.2" textLength="35.6" lengthAdjust="spacingAndGlyphs" >Insert</text>
<path d="M1147.0 139.2h6l-3.0 3.6z" fill="#d6d6d6"/>
<rect x="1180.5" y="82" width="11" height="8.6" fill="#6d7380" stroke="#a9adb5" stroke-width="1"/>
<circle cx="1192.3" cy="90" r="3.6" fill="none" stroke="#b9bcc2" stroke-width="1" />
<line x1="1192.3" y1="86" x2="1192.3" y2="90" stroke="#b9bcc2" stroke-width="1" />
<rect x="1179" y="88.8" width="2.4" height="2.4" fill="#e6e6e6" />
<path d="M1194.0 73.6L1194.92 76.58L1197.68 75.12L1196.22 77.88L1199.2 78.8L1196.22 79.72L1197.68 82.48L1194.92 81.02L1194.0 84.0L1193.08 81.02L1190.32 82.48L1191.78 79.72L1188.8 78.8L1191.78 77.88L1190.32 75.12L1193.08 76.58z" fill="#f7c766" />
<rect x="1180.5" y="112.5" width="11" height="8.6" fill="#6d7380" stroke="#a9adb5" stroke-width="1"/>
<circle cx="1194" cy="120.5" r="3.6" fill="none" stroke="#b9bcc2" stroke-width="1" />
<line x1="1194" y1="116.5" x2="1194" y2="120.5" stroke="#b9bcc2" stroke-width="1" />
<rect x="1179" y="119.3" width="2.4" height="2.4" fill="#e6e6e6" />
<path d="M1188.5 116.5L1191.93 115.4L1189.6 113.07z" fill="#e0e0e0" />
<path d="M1191.93 115.4L1197.83 109.51L1195.49 107.17L1189.6 113.07z" fill="#f5c462" />
<path d="M1197.83 109.51L1199.1 108.23Q1198.92 106.08 1196.77 105.9L1195.49 107.17z" fill="#ea505c" />
<path d="M1179.3 138.5L1186 137L1197.5 148.5L1189.5 156L1179.5 145.5z" fill="#d6d6d6" />
<circle cx="1182.8" cy="141" r="1.1" fill="#3b4453" />
<path d="M1184 145l7 4.2M1186.5 148.5l3.5 2.2" fill="None" stroke="#666" stroke-width="0.8" />
<path d="M1188.5 146.5L1191.95 145.46L1189.65 143.09z" fill="#e0e0e0" />
<path d="M1191.95 145.46L1197.78 139.79L1195.48 137.43L1189.65 143.09z" fill="#f5c462" />
<path d="M1197.78 139.79L1199.07 138.54Q1198.93 136.38 1196.78 136.17L1195.48 137.43z" fill="#ea505c" />
<path d="M1209.05 143.79999999999998h6.5l-3.25 3.8z" fill="#d6d6d6"/>
<text x="1146.5" y="181.5" font-size="15.5" fill="#f8f8f8" stroke="#3b4453" stroke-width="0.2" textLength="36.0" lengthAdjust="spacingAndGlyphs" >Block</text>
<path d="M1190.45 175.0h9.5l-4.75 5z" fill="#d6d6d6"/>
<rect x="1244.4" y="72" width="25.4" height="35.2" fill="#e2e2e2" />
<rect x="1248" y="75" width="16.6" height="12" fill="#86c9fb" stroke="#69717d" stroke-width="0.8"/>
<line x1="1249" y1="93.8" x2="1263.5" y2="93.8" stroke="#666" stroke-width="0.9" />
<line x1="1249" y1="100.6" x2="1262" y2="100.6" stroke="#666" stroke-width="0.9" />
<rect x="1252" y="91.6" width="1.8" height="4.2" fill="#555" />
<rect x="1259.5" y="98.4" width="1.8" height="4.2" fill="#555" />
<path d="M1263 100.5L1270.8 94L1280 105L1273 111.5z" fill="#f7c766" />
<path d="M1270.8 94L1274.2 96.8L1278.5 93L1283.3 99L1279.5 102.5L1280.8 104.2L1280 105z" fill="#f2f2f2" />
<text x="1242.3" y="131.8" font-size="15.5" fill="#f8f8f8" stroke="#3b4453" stroke-width="0.2" textLength="40.7" lengthAdjust="spacingAndGlyphs" >Match</text>
<text x="1229.2" y="151.8" font-size="15.5" fill="#f8f8f8" stroke="#3b4453" stroke-width="0.2" textLength="67.0" lengthAdjust="spacingAndGlyphs" >Properties</text>
<path d="M1313 84L1308.0 75.34A10 10 0 0 1 1318.0 75.34z" fill="#fdc53a" />
<path d="M1313 84L1318.0 75.34A10 10 0 0 1 1323.0 84.0z" fill="#f78a2e" />
<path d="M1313 84L1323.0 84.0A10 10 0 0 1 1318.0 92.66z" fill="#e8504c" />
<path d="M1313 84L1318.0 92.66A10 10 0 0 1 1308.0 92.66z" fill="#8a55f0" />
<path d="M1313 84L1308.0 92.66A10 10 0 0 1 1303.0 84.0z" fill="#14b4d8" />
<path d="M1313 84L1303.0 84.0A10 10 0 0 1 1308.0 75.34z" fill="#4fcb7a" />
<rect x="1303" y="105" width="20" height="2" fill="#e0e0e0" />
<rect x="1303" y="110.5" width="20" height="4" fill="#e0e0e0" />
<rect x="1303" y="118.8" width="20" height="6" fill="#e0e0e0" />
<line x1="1303" y1="138.5" x2="1322" y2="138.5" stroke="#d0d0d0" stroke-width="1.2" stroke-dasharray="2 1.2"/>
<line x1="1303" y1="142" x2="1322" y2="142" stroke="#d0d0d0" stroke-width="1.2" stroke-dasharray="5 1.5"/>
<line x1="1303" y1="145.5" x2="1322" y2="145.5" stroke="#d0d0d0" stroke-width="1.2" />
<line x1="1303" y1="149" x2="1322" y2="149" stroke="#d0d0d0" stroke-width="1.2" stroke-dasharray="4 1.5"/>
<line x1="1303" y1="152.5" x2="1322" y2="152.5" stroke="#d0d0d0" stroke-width="1.2" stroke-dasharray="7 1.5"/>
<rect x="1326.5" y="70.5" width="170" height="27" fill="#4e596d" stroke="#2b323d" stroke-width="1"/>
<rect x="1326.5" y="101.7" width="170" height="27" fill="#4e596d" stroke="#2b323d" stroke-width="1"/>
<rect x="1326.5" y="132.8" width="170" height="27" fill="#4e596d" stroke="#2b323d" stroke-width="1"/>
<rect x="1335.3" y="74.5" width="19.4" height="19" fill="#00ff00" stroke="#c9ccd0" stroke-width="1.2"/>
<text x="1360.4" y="90" font-size="15.5" fill="#f8f8f8" stroke="#3b4453" stroke-width="0.2" textLength="51.1" lengthAdjust="spacingAndGlyphs" >ByLayer</text>
<line x1="1335" y1="114.4" x2="1415" y2="114.4" stroke="#ececec" stroke-width="1.1" />
<text x="1417.5" y="121" font-size="15.5" fill="#f8f8f8" stroke="#3b4453" stroke-width="0.2" textLength="50.7" lengthAdjust="spacingAndGlyphs" >ByLayer</text>
<line x1="1335" y1="146.2" x2="1415" y2="146.2" stroke="#ececec" stroke-width="1.1" />
<text x="1417.5" y="152" font-size="15.5" fill="#f8f8f8" stroke="#3b4453" stroke-width="0.2" textLength="50.7" lengthAdjust="spacingAndGlyphs" >ByLayer</text>
<path d="M1484.8999999999999 81.9h9.8l-4.9 5.2z" fill="#dcdcdc"/>
<path d="M1484.8999999999999 112.9h9.8l-4.9 5.2z" fill="#dcdcdc"/>
<path d="M1484.8999999999999 143.9h9.8l-4.9 5.2z" fill="#dcdcdc"/>
<text x="1311.2" y="181.5" font-size="15.5" fill="#f8f8f8" stroke="#3b4453" stroke-width="0.2" textLength="66.8" lengthAdjust="spacingAndGlyphs" >Properties</text>
<path d="M1385.25 175.0h9.5l-4.75 5z" fill="#d6d6d6"/>
<path d="M1487 173.5L1492.5 179M1493 174.5V179.5H1488" fill="None" stroke="#c9c9c9" stroke-width="1.2" />
<path d="M1513 78H1508.2V111.8H1513M1530 111.8H1534.8V93" fill="None" stroke="#d0d3d8" stroke-width="1.3" />
<rect x="1515.3" y="83.3" width="12.4" height="9.2" fill="#46668a" stroke="#6ab8f0" stroke-width="1"/>
<circle cx="1521.5" cy="102.3" r="6.3" fill="#6d7380" stroke="#b4b8be" stroke-width="1" />
<path d="M1538.53 72.6L1538.96 78.95L1545.0 76.96L1540.82 81.76L1546.5 84.63L1540.15 85.06L1542.14 91.1L1537.34 86.92L1534.47 92.6L1534.04 86.25L1528.0 88.24L1532.18 83.44L1526.5 80.57L1532.85 80.14L1530.86 74.1L1535.66 78.28z" fill="#fbd178" />
<text x="1506.3" y="131.8" font-size="15.5" fill="#f8f8f8" stroke="#3b4453" stroke-width="0.2" textLength="40.7" lengthAdjust="spacingAndGlyphs" >Group</text>
<rect x="1558.3" y="76.5" width="7.5" height="6" fill="#46668a" stroke="#6ab8f0" stroke-width="1"/>
<ellipse cx="1562" cy="87.5" rx="3.8" ry="3.3" fill="#6d7380" stroke="#b4b8be" stroke-width="1" />
<path d="M1569 74.2H1571.8V93.5H1569" fill="None" stroke="#d0d3d8" stroke-width="1.1" />
<path d="M1568.8 81.8L1574.8 87.8M1574.8 81.8L1568.8 87.8" fill="None" stroke="#ee4458" stroke-width="1.8" />
<path d="M1559.5 105.3H1557V122H1559.5M1565.5 105.3H1568V117" fill="None" stroke="#d0d3d8" stroke-width="1.1" />
<rect x="1559.6" y="107.6" width="5.6" height="4.6" fill="#46668a" stroke="#6ab8f0" stroke-width="1"/>
<circle cx="1562.4" cy="117" r="2.7" fill="#6d7380" stroke="#b4b8be" stroke-width="1" />
<path d="M1566.0 124.6L1569.45 123.58L1567.17 121.19z" fill="#e0e0e0" />
<path d="M1569.45 123.58L1574.76 118.49L1572.48 116.11L1567.17 121.19z" fill="#f5c462" />
<path d="M1574.76 118.49L1576.06 117.24Q1575.93 115.08 1573.78 114.86L1572.48 116.11z" fill="#ea505c" />
<rect x="1553" y="132.6" width="27.5" height="25.5" fill="#44607f" stroke="#74c0f6" stroke-width="1.6"/>
<path d="M1560.5 136.5H1558V152.5H1560.5M1566.5 136.5H1569V141" fill="None" stroke="#d0d3d8" stroke-width="1.1" />
<rect x="1561" y="138.8" width="5.6" height="4.6" fill="none" stroke="#5cd07a" stroke-width="1.1"/>
<circle cx="1563.8" cy="148.2" r="2.7" fill="none" stroke="#5cd07a" stroke-width="1.1" />
<path d="M1568 144.5l0 10.45l2.4699999999999998 -2.28l2.09 4.369999999999999l1.9 -0.95l-2.09 -4.18l3.42 0z" fill="#f4f4f4" />
<text x="1510.8" y="181.5" font-size="15.5" fill="#f8f8f8" stroke="#3b4453" stroke-width="0.2" textLength="47.6" lengthAdjust="spacingAndGlyphs" >Groups</text>
<path d="M1565.45 175.0h9.5l-4.75 5z" fill="#d6d6d6"/>
<rect x="1612" y="87.5" width="35.8" height="8.6" fill="#f7c766" />
<line x1="1614.98" y1="87.5" x2="1614.98" y2="90.2" stroke="#3b4453" stroke-width="0.8" />
<line x1="1617.96" y1="87.5" x2="1617.96" y2="91.5" stroke="#3b4453" stroke-width="0.8" />
<line x1="1620.94" y1="87.5" x2="1620.94" y2="90.2" stroke="#3b4453" stroke-width="0.8" />
<line x1="1623.92" y1="87.5" x2="1623.92" y2="91.5" stroke="#3b4453" stroke-width="0.8" />
<line x1="1626.9" y1="87.5" x2="1626.9" y2="90.2" stroke="#3b4453" stroke-width="0.8" />
<line x1="1629.88" y1="87.5" x2="1629.88" y2="91.5" stroke="#3b4453" stroke-width="0.8" />
<line x1="1632.86" y1="87.5" x2="1632.86" y2="90.2" stroke="#3b4453" stroke-width="0.8" />
<line x1="1635.84" y1="87.5" x2="1635.84" y2="91.5" stroke="#3b4453" stroke-width="0.8" />
<line x1="1638.82" y1="87.5" x2="1638.82" y2="90.2" stroke="#3b4453" stroke-width="0.8" />
<line x1="1641.8" y1="87.5" x2="1641.8" y2="91.5" stroke="#3b4453" stroke-width="0.8" />
<line x1="1644.78" y1="87.5" x2="1644.78" y2="90.2" stroke="#3b4453" stroke-width="0.8" />
<text x="1602.6" y="132.8" font-size="15.5" fill="#f8f8f8" stroke="#3b4453" stroke-width="0.2" textLength="55.6" lengthAdjust="spacingAndGlyphs" >Measure</text>
<path d="M1627.0 141.1h6l-3.0 3.6z" fill="#d6d6d6"/>
<path d="M1676.6 79.8l0 11.0l2.6 -2.4l2.2 4.6l2.0 -1.0l-2.2 -4.4l3.6 0z" fill="#f4f4f4" />
<path d="M1688 73.5L1683.5 79.5H1686.5L1684.5 84L1690.5 77.5H1687.3z" fill="#f7c766" />
<rect x="1685.3" y="82.5" width="11.7" height="11.5" fill="#f0f0f0" />
<line x1="1689.5" y1="85.5" x2="1695" y2="85.5" stroke="#3f86d0" stroke-width="1.1" />
<rect x="1687" y="84.9" width="1.2" height="1.2" fill="#3f86d0" />
<line x1="1689.5" y1="88.4" x2="1695" y2="88.4" stroke="#3f86d0" stroke-width="1.1" />
<rect x="1687" y="87.80000000000001" width="1.2" height="1.2" fill="#3f86d0" />
<line x1="1689.5" y1="91.3" x2="1695" y2="91.3" stroke="#3f86d0" stroke-width="1.1" />
<rect x="1687" y="90.7" width="1.2" height="1.2" fill="#3f86d0" />
<rect x="1677.3" y="105.3" width="18" height="19" fill="none" stroke="#4fcb7a" stroke-width="1.1" stroke-dasharray="2.2 1.2"/>
<rect x="1684" y="107.5" width="10" height="10" fill="#6ccf8d" />
<rect x="1679.5" y="112" width="9.5" height="9.5" fill="#6ccf8d" stroke="#3b4453" stroke-width="1"/>
<path d="M1689.5 113.5l0 10.45l2.4699999999999998 -2.28l2.09 4.369999999999999l1.9 -0.95l-2.09 -4.18l3.42 0z" fill="#f4f4f4" />
<rect x="1679.3" y="135.8" width="14.6" height="20" fill="#d6d6d6" />
<rect x="1681.5" y="138.2" width="10.2" height="3.6" fill="#666" />
<rect x="1681.5" y="143.8" width="2.7" height="2.7" fill="#666" />
<rect x="1685.2" y="143.8" width="2.7" height="2.7" fill="#666" />
<rect x="1688.9" y="143.8" width="2.7" height="2.7" fill="#666" />
<rect x="1681.5" y="147.5" width="2.7" height="2.7" fill="#666" />
<rect x="1685.2" y="147.5" width="2.7" height="2.7" fill="#666" />
<rect x="1688.9" y="147.5" width="2.7" height="2.7" fill="#666" />
<rect x="1681.5" y="151.20000000000002" width="2.7" height="2.7" fill="#666" />
<rect x="1685.2" y="151.20000000000002" width="2.7" height="2.7" fill="#666" />
<rect x="1688.9" y="151.20000000000002" width="2.7" height="2.7" fill="#666" />
<text x="1612.2" y="181.5" font-size="15.5" fill="#f8f8f8" stroke="#3b4453" stroke-width="0.2" textLength="50.0" lengthAdjust="spacingAndGlyphs" >Utilities</text>
<path d="M1670.25 175.0h9.5l-4.75 5z" fill="#d6d6d6"/>
<rect x="1724" y="77" width="27.6" height="31" fill="#dcae72" />
<path d="M1731 78V76.5H1734.5A3 2.6 0 0 1 1740.5 76.5H1744V78z" fill="#f4f4f4" />
<path d="M1732.8 85H1749L1756 92V112.8H1732.8z" fill="#dcdcdc" stroke="#3b4453" stroke-width="0.8" />
<path d="M1749 85V92H1756z" fill="#f6f6f6" />
<text x="1723.2" y="133.8" font-size="15.5" fill="#f8f8f8" stroke="#3b4453" stroke-width="0.2" textLength="33.4" lengthAdjust="spacingAndGlyphs" >Paste</text>
<path d="M1737.0 142.0h6l-3.0 3.6z" fill="#d6d6d6"/>
<rect x="1776" y="73.8" width="14.8" height="17" fill="#d0d0d0" />
<line x1="1778" y1="77" x2="1788.5" y2="77" stroke="#7a7a7a" stroke-width="0.8" />
<line x1="1778" y1="80.2" x2="1788.5" y2="80.2" stroke="#7a7a7a" stroke-width="0.8" />
<line x1="1778" y1="83.4" x2="1788.5" y2="83.4" stroke="#7a7a7a" stroke-width="0.8" />
<line x1="1778" y1="86.6" x2="1788.5" y2="86.6" stroke="#7a7a7a" stroke-width="0.8" />
<path d="M1784.5 79.5L1792.5 90M1794.5 79.5L1787 90" fill="None" stroke="#f4f4f4" stroke-width="1.4" />
<circle cx="1786.3" cy="91.7" r="1.9" fill="none" stroke="#f4f4f4" stroke-width="1.1" />
<circle cx="1793.6" cy="91.7" r="1.9" fill="none" stroke="#f4f4f4" stroke-width="1.1" />
<path d="M1802.75 82.89999999999999h6.5l-3.25 3.8z" fill="#d6d6d6"/>
<path d="M1778 105H1786L1790 109V121H1778z" fill="#c9c9c9" />
<path d="M1782 109H1790L1794 113V124.8H1782z" fill="#dcdcdc" stroke="#3b4453" stroke-width="0.8" />
<path d="M1790 109V113H1794z" fill="#f6f6f6" />
<path d="M1802.75 113.89999999999999h6.5l-3.25 3.8z" fill="#d6d6d6"/>
<text x="1729.8" y="181.5" font-size="15.5" fill="#f8f8f8" stroke="#3b4453" stroke-width="0.2" textLength="65.9" lengthAdjust="spacingAndGlyphs" >Clipboard</text>
<path d="M1839.8 77.2H1857V89.5H1880V107H1839.8z" fill="#dcdcdc" />
<text x="1844.4" y="132.8" font-size="15.5" fill="#f8f8f8" stroke="#3b4453" stroke-width="0.2" textLength="30.6" lengthAdjust="spacingAndGlyphs" >Base</text>
<path d="M1857.0 141.1h6l-3.0 3.6z" fill="#d6d6d6"/>
<text x="1825.8" y="181.5" font-size="15.5" fill="#f8f8f8" stroke="#3b4453" stroke-width="0.2" textLength="32.4" lengthAdjust="spacingAndGlyphs" >View</text>
<path d="M1866.05 175.0h9.5l-4.75 5z" fill="#d6d6d6"/>
<path d="M1887.3 173.5L1892.8 179M1893.3 174.5V179.5H1888.3" fill="None" stroke="#c9c9c9" stroke-width="1.2" />
<defs>
<linearGradient id="gU" x1="0" x2="1" y1="0" y2="0"><stop offset="0" stop-color="#47494c"/><stop offset="0.22" stop-color="#595c5e"/><stop offset="0.55" stop-color="#686b6d"/><stop offset="0.8" stop-color="#858889"/><stop offset="1" stop-color="#8d9091"/></linearGradient>
<linearGradient id="gT" x1="0" x2="1" y1="0" y2="0"><stop offset="0" stop-color="#7d8182"/><stop offset="0.45" stop-color="#868a8b"/><stop offset="0.55" stop-color="#818586"/><stop offset="1" stop-color="#858989"/></linearGradient>
<linearGradient id="gL" x1="0" x2="1" y1="0" y2="0"><stop offset="0" stop-color="#7a7e80"/><stop offset="0.3" stop-color="#898d8e"/><stop offset="0.5" stop-color="#7f8385"/><stop offset="0.75" stop-color="#85898a"/><stop offset="1" stop-color="#6f7376"/></linearGradient>
<linearGradient id="gD" x1="0" x2="0" y1="0" y2="1"><stop offset="0" stop-color="#1e242c" stop-opacity="0.35"/><stop offset="1" stop-color="#1e242c" stop-opacity="0"/></linearGradient>
<linearGradient id="gG" x1="0" x2="1" y1="0" y2="0"><stop offset="0" stop-color="#6fa476" stop-opacity="0.34"/><stop offset="0.55" stop-color="#5a9062" stop-opacity="0.38"/><stop offset="1" stop-color="#2f5f3a" stop-opacity="0.55"/></linearGradient>
</defs>
<path d="M970.0 556.0L835.0 331.4A140.3 68.3 0 0 0 1104.4 331.4z" fill="url(#gU)" />
<ellipse cx="969.7" cy="312.3" rx="140.3" ry="68.3" fill="url(#gT)" stroke="#f4f4f4" stroke-width="1.1" />
<line x1="854.3" y1="273.5" x2="970.0" y2="556.0" stroke="#d8d8d8" stroke-width="0.9" opacity="0.75"/>
<line x1="1049.5" y1="256.1" x2="970.0" y2="556.0" stroke="#d8d8d8" stroke-width="0.9" opacity="0.75"/>
<line x1="1085.1" y1="351.1" x2="970.0" y2="556.0" stroke="#ffffff" stroke-width="1.15" />
<line x1="889.9" y1="368.5" x2="970.0" y2="556.0" stroke="#ffffff" stroke-width="1.15" />
<path d="M970.0 556.0L834.9 781.5A140.3 68.0 0 1 0 1104.5 781.5z" fill="#808486" />
<clipPath id="cB"><path d="M970.0 556.0L834.9 781.5A140.3 68.0 0 1 0 1104.5 781.5z"/></clipPath>
<g clip-path="url(#cB)">
<path d="M970.0 556.0L1101.5 776.7L1105.0 782.0z" fill="#565a5e" />
<path d="M970.0 556.0L1104.6 781.3L1107.2 786.7z" fill="#575b5f" />
<path d="M970.0 556.0L1106.9 786.0L1108.8 791.5z" fill="#585c60" />
<path d="M970.0 556.0L1108.6 790.7L1109.8 796.3z" fill="#595d61" />
<path d="M970.0 556.0L1109.7 795.6L1110.0 801.1z" fill="#5a5e62" />
<path d="M970.0 556.0L1110.0 800.4L1109.5 806.0z" fill="#5a5e62" />
<path d="M970.0 556.0L1109.7 805.2L1108.4 810.8z" fill="#5b5f63" />
<path d="M970.0 556.0L1108.6 810.1L1106.6 815.5z" fill="#5c6064" />
<path d="M970.0 556.0L1106.9 814.8L1104.2 820.2z" fill="#5d6165" />
<path d="M970.0 556.0L1104.6 819.5L1101.0 824.8z" fill="#5e6266" />
<path d="M970.0 556.0L1101.5 824.1L1097.3 829.3z" fill="#606468" />
<path d="M970.0 556.0L1097.9 828.6L1092.9 833.6z" fill="#63676b" />
<path d="M970.0 556.0L1093.6 833.0L1087.9 837.8z" fill="#666a6e" />
<path d="M970.0 556.0L1088.7 837.2L1082.3 841.8z" fill="#6e7276" />
<path d="M970.0 556.0L1083.2 841.2L1076.2 845.5z" fill="#7a7e81" />
<path d="M970.0 556.0L1077.2 845.0L1069.6 849.1z" fill="#7c8082" />
<path d="M970.0 556.0L1070.6 848.6L1062.5 852.4z" fill="#7d8184" />
<path d="M970.0 556.0L1063.6 851.9L1054.9 855.5z" fill="#7e8285" />
<path d="M970.0 556.0L1056.1 855.1L1046.9 858.3z" fill="#7f8386" />
<path d="M970.0 556.0L1048.2 857.9L1038.6 860.8z" fill="#808487" />
<path d="M970.0 556.0L1039.9 860.5L1029.9 863.1z" fill="#828688" />
<path d="M970.0 556.0L1031.2 862.7L1020.9 865.0z" fill="#838789" />
<path d="M970.0 556.0L1022.3 864.7L1011.7 866.6z" fill="#84888a" />
<path d="M970.0 556.0L1013.1 866.4L1002.2 867.9z" fill="#838789" />
<path d="M970.0 556.0L1003.6 867.7L992.6 868.8z" fill="#828688" />
<path d="M970.0 556.0L994.1 868.7L982.9 869.5z" fill="#818587" />
<path d="M970.0 556.0L984.4 869.4L973.1 869.7z" fill="#808486" />
<path d="M970.0 556.0L974.6 869.7L963.3 869.7z" fill="#7f8385" />
<path d="M970.0 556.0L964.8 869.7L953.6 869.3z" fill="#7e8284" />
<path d="M970.0 556.0L955.0 869.4L943.9 868.6z" fill="#7c8083" />
<path d="M970.0 556.0L945.3 868.7L934.3 867.5z" fill="#7d8183" />
<path d="M970.0 556.0L935.8 867.7L925.0 866.1z" fill="#7e8284" />
<path d="M970.0 556.0L926.3 866.4L915.8 864.4z" fill="#7f8385" />
<path d="M970.0 556.0L917.1 864.7L906.9 862.4z" fill="#808486" />
<path d="M970.0 556.0L908.2 862.7L898.3 860.1z" fill="#818587" />
<path d="M970.0 556.0L899.6 860.5L890.0 857.5z" fill="#828688" />
<path d="M970.0 556.0L891.2 857.9L882.2 854.6z" fill="#888c8d" />
<path d="M970.0 556.0L883.3 855.1L874.7 851.5z" fill="#8a8e8f" />
<path d="M970.0 556.0L875.8 851.9L867.8 848.1z" fill="#8a8e8f" />
<path d="M970.0 556.0L868.8 848.6L861.3 844.4z" fill="#8a8e8f" />
<path d="M970.0 556.0L862.2 845.0L855.3 840.6z" fill="#8a8e8f" />
<path d="M970.0 556.0L856.2 841.2L849.9 836.5z" fill="#8b8f90" />
<path d="M970.0 556.0L850.7 837.2L845.1 832.3z" fill="#8b8f90" />
<path d="M970.0 556.0L845.8 833.0L840.9 827.9z" fill="#8b8f90" />
<path d="M970.0 556.0L841.5 828.6L837.4 823.4z" fill="#8b8f90" />
<path d="M970.0 556.0L837.9 824.1L834.4 818.8z" fill="#8b8f90" />
<path d="M970.0 556.0L834.8 819.5L832.2 814.1z" fill="#8a8e8f" />
<path d="M970.0 556.0L832.5 814.8L830.6 809.3z" fill="#888c8d" />
<path d="M970.0 556.0L830.8 810.1L829.6 804.5z" fill="#868a8b" />
<path d="M970.0 556.0L829.7 805.2L829.4 799.7z" fill="#848889" />
<path d="M970.0 556.0L829.4 800.4L829.9 794.8z" fill="#828687" />
<path d="M970.0 556.0L829.7 795.6L831.0 790.0z" fill="#7f8385" />
<path d="M970.0 556.0L830.8 790.7L832.8 785.3z" fill="#7d8183" />
<path d="M970.0 556.0L832.5 786.0L835.2 780.6z" fill="#7b7f81" />
<path d="M970.0 556.0L834.8 781.3L838.4 776.0z" fill="#797d7f" />
</g>
<ellipse cx="969.7" cy="800.4" rx="140.3" ry="68.0" fill="#ffffff10" stroke="none" stroke-width="1" />
<path d="M986.5 867.9L984.3 859.4L982.2 851.1L980.2 842.9L978.1 834.8L976.2 826.8L974.3 819.0L972.4 811.3L970.6 803.7L968.9 796.3L967.2 789.0L965.6 781.8L964.0 774.8L962.5 767.9L961.0 761.1L959.6 754.5L958.2 748.0L956.9 741.6L955.6 735.3L954.4 729.2L953.2 723.2L952.1 717.3L951.1 711.6L950.1 706.0L949.1 700.5L948.2 695.2L947.4 690.0L946.6 684.9L945.9 680.0L945.2 675.1L944.6 670.4L944.0 665.9L943.5 661.5L943.0 657.2L942.6 653.0L942.2 649.0L941.9 645.1L941.7 641.3L941.5 637.7L941.3 634.2L941.2 630.8L941.2 627.5L941.2 624.4L941.3 621.4L941.4 618.6L941.6 615.8L941.8 613.3L942.1 610.8L942.4 608.5L942.8 606.3L943.2 604.2L943.7 602.2L944.2 600.4L944.8 598.8L945.5 597.2L946.2 595.8L946.9 594.5L947.8 593.3L948.6 592.3L949.5 591.4L950.5 590.7L951.5 590.0L952.6 589.5L953.7 589.2L954.9 588.9L956.1 588.8L957.4 588.8L958.8 589.0L960.2 589.3L961.6 589.7L963.1 590.2L964.7 590.9L966.3 591.7L967.9 592.6L969.6 593.7L971.4 594.9L973.2 596.2L975.1 597.7L977.0 599.3L979.0 601.0L981.0 602.9L983.1 604.8L985.3 607.0L987.5 609.2L989.7 611.6L992.0 614.1L994.4 616.7L996.8 619.5L999.2 622.4L1001.7 625.4L1004.3 628.6L1006.9 631.9L1009.6 635.3L1012.3 638.8L1015.1 642.5L1017.9 646.3L1020.8 650.3L1023.7 654.3L1026.7 658.6L1029.8 662.9L1032.9 667.4L1036.0 672.0L1039.2 676.7L1042.5 681.5L1045.8 686.5L1049.1 691.7L1052.5 696.9L1056.0 702.3L1059.5 707.8L1063.1 713.4L1066.7 719.2L1070.4 725.1L1074.2 731.2L1077.9 737.3L1081.8 743.6L1085.7 750.1L1089.6 756.6L1093.6 763.3L1097.7 770.1L1101.8 777.1L1105.9 784.2z" fill="url(#gG)" />
<path d="M986.5 867.9A140.3 68.0 0 0 0 1105.9 784.2z" fill="#7f8385" />
<ellipse cx="970.3" cy="678.2" rx="70.2" ry="34.1" fill="#b0707055" stroke="none" stroke-width="1" />
<path d="M900.1 678.2A70.2 34.1 0 0 0 1040.5 678.2" fill="none" stroke="#f4f4f4" stroke-width="1.15" />
<path d="M900.1 678.2A70.2 34.1 0 0 1 1040.5 678.2" fill="none" stroke="#dfeadf" stroke-width="0.95" opacity="0.75"/>
<path d="M950.5 590.7L949.5 591.4L948.6 592.3L947.8 593.3L946.9 594.5L946.2 595.8L945.5 597.2L944.8 598.8L944.2 600.4L943.7 602.2L943.2 604.2L942.8 606.3L942.4 608.5L942.1 610.8L941.8 613.3L941.6 615.8L941.4 618.6L941.3 621.4L941.2 624.4L941.2 627.5L941.2 630.8L941.3 634.2L941.5 637.7L941.7 641.3L941.9 645.1L942.2 649.0L942.6 653.0L943.0 657.2L943.5 661.5L944.0 665.9L944.6 670.4L945.2 675.1L945.9 680.0L946.6 684.9L947.4 690.0L948.2 695.2L949.1 700.5L950.1 706.0L951.1 711.6L952.1 717.3L953.2 723.2L954.4 729.2L955.6 735.3L956.9 741.6L958.2 748.0L959.6 754.5L961.0 761.1L962.5 767.9L964.0 774.8L965.6 781.8L967.2 789.0L968.9 796.3L970.6 803.7L972.4 811.3L974.3 819.0L976.2 826.8L978.1 834.8L980.2 842.9L982.2 851.1L984.3 859.4L986.5 867.9" fill="none" stroke="#f2f2f2" stroke-width="1.15" />
<path d="M950.5 590.7L951.5 590.0L952.6 589.5L953.7 589.2L954.9 588.9L956.1 588.8L957.4 588.8L958.8 589.0L960.2 589.3L961.6 589.7L963.1 590.2L964.7 590.9L966.3 591.7L967.9 592.6L969.6 593.7L971.4 594.9L973.2 596.2L975.1 597.7L977.0 599.3L979.0 601.0L981.0 602.9L983.1 604.8L985.3 607.0L987.5 609.2L989.7 611.6L992.0 614.1L994.4 616.7L996.8 619.5L999.2 622.4L1001.7 625.4L1004.3 628.6L1006.9 631.9L1009.6 635.3L1012.3 638.8L1015.1 642.5L1017.9 646.3L1020.8 650.3L1023.7 654.3L1026.7 658.6L1029.8 662.9L1032.9 667.4L1036.0 672.0L1039.2 676.7L1042.5 681.5L1045.8 686.5L1049.1 691.7L1052.5 696.9L1056.0 702.3L1059.5 707.8L1063.1 713.4L1066.7 719.2L1070.4 725.1L1074.2 731.2L1077.9 737.3L1081.8 743.6L1085.7 750.1L1089.6 756.6L1093.6 763.3L1097.7 770.1L1101.8 777.1L1105.9 784.2" fill="none" stroke="#dfe8df" stroke-width="0.9" opacity="0.7"/>
<line x1="986.5" y1="867.9" x2="1105.9" y2="784.2" stroke="#dcdcdc" stroke-width="0.95" opacity="0.9"/>
<path d="M829.4 800.4A140.3 68.0 0 0 0 1110.0 800.4" fill="none" stroke="#f6f6f6" stroke-width="1.4" />
<path d="M829.4 800.4A140.3 68.0 0 0 1 1110.0 800.4" fill="none" stroke="#e0e0e0" stroke-width="1" opacity="0.8"/>
<line x1="970.0" y1="556.0" x2="834.9" y2="781.5" stroke="#b8bbbd" stroke-width="0.8" opacity="0.6"/>
<line x1="970.0" y1="556.0" x2="1104.5" y2="781.5" stroke="#b8bbbd" stroke-width="0.8" opacity="0.6"/>
<line x1="970.0" y1="556.0" x2="1085.1" y2="839.1" stroke="#f4f4f4" stroke-width="1.05" />
<line x1="970.0" y1="556.0" x2="889.9" y2="856.3" stroke="#f4f4f4" stroke-width="1.1" />
<line x1="970.0" y1="556.0" x2="854.3" y2="761.7" stroke="#e0e0e0" stroke-width="1" opacity="0.75"/>
<line x1="970.0" y1="556.0" x2="1049.5" y2="744.5" stroke="#d4e2d4" stroke-width="0.9" opacity="0.4"/>
<line x1="1911" y1="253" x2="943" y2="940" stroke="#10e810" stroke-width="1" shape-rendering="crispEdges"/>
<line x1="1083.7" y1="837" x2="1063" y2="784.5" stroke="#b34c47" stroke-width="6.2" stroke-linecap="round"/>
<line x1="1082.5" y1="837" x2="1061.8" y2="784.5" stroke="#d4756e" stroke-width="1.6" opacity="0.7"/>
<line x1="1083.7" y1="837" x2="1128.5" y2="830.5" stroke="#2f68bd" stroke-width="6.2" stroke-linecap="round"/>
<line x1="1083.7" y1="835.7" x2="1128.5" y2="829.2" stroke="#5d93df" stroke-width="1.4" opacity="0.7"/>
<line x1="1082.7" y1="838" x2="1052" y2="861.5" stroke="#3a883a" stroke-width="6.6" stroke-linecap="round"/>
<circle cx="1050.6" cy="862.6" r="2.2" fill="#74bc74" />
<path d="M1059.6 764.7L1074.9 780M1074.9 764.7L1060 779.6" fill="None" stroke="#e04038" stroke-width="1.1" />
<path d="M1127.5 810.4H1142.5L1127.5 825.5H1142.5" fill="None" stroke="#2f7df0" stroke-width="1.1" />
<path d="M1047 844.1L1054.7 852L1062.2 845.1M1054.7 852V858.8" fill="None" stroke="#22c022" stroke-width="1.1" />
<text x="8.8" y="245.6" font-size="15" fill="#dfe2e6" >[</text>
<text x="14.2" y="245.2" font-size="15" fill="#dfe2e6" >−</text>
<text x="24.3" y="245.6" font-size="15" fill="#dfe2e6" >]</text>
<text x="30.8" y="245.6" font-size="15" fill="#dfe2e6" textLength="93.0" lengthAdjust="spacingAndGlyphs" >[Custom View]</text>
<text x="125.8" y="245.6" font-size="15" fill="#dfe2e6" textLength="46.0" lengthAdjust="spacingAndGlyphs" >[X-Ray]</text>
<rect x="1838" y="244" width="13" height="3" fill="#efefef" />
<rect x="1866" y="236.5" width="10" height="9" fill="none" stroke="#c9c9c9" stroke-width="1.4"/>
<rect x="1863.5" y="239.5" width="10" height="9.5" fill="#212830" stroke="#efefef" stroke-width="2.6"/>
<path d="M1888.5 237.5L1899.5 247M1899.5 237.5L1888.5 247" fill="None" stroke="#efefef" stroke-width="2.8" />
<line x1="1531.3" y1="579.2" x2="1569.7" y2="676" stroke="#e28a66" stroke-width="1" shape-rendering="crispEdges"/>
<line x1="1531.3" y1="648.5" x2="1609.8" y2="634.4" stroke="#5b9bd8" stroke-width="1" shape-rendering="crispEdges"/>
<line x1="1517.2" y1="671.6" x2="1576.9" y2="630.4" stroke="#9acd4f" stroke-width="1" shape-rendering="crispEdges"/>
<rect x="1553.5" y="640.5" width="6" height="6" fill="#212830" stroke="#ffffff" stroke-width="1" shape-rendering="crispEdges"/>
<path fill-rule="evenodd" fill="#454b55" d="M1765.6 367a64.6 35 0 1 0 129.2 0a64.6 35 0 1 0 -129.2 0zM1780 364.5a50.2 25.5 0 1 0 100.4 0a50.2 25.5 0 1 0 -100.4 0z"/>
<text x="0" y="0" font-size="15" font-weight="bold" fill="#b4b7bc" transform="translate(1777.5 351) rotate(-24) skewX(-24) scale(1.12 0.95)">W</text>
<text x="0" y="0" font-size="17" font-weight="bold" fill="#b4b7bc" transform="translate(1781.5 392.5) rotate(15) skewX(22) scale(1.3 0.9)">S</text>
<text x="0" y="0" font-size="15" font-weight="bold" fill="#b4b7bc" transform="translate(1873.5 383) rotate(20) skewX(-25) scale(1.15 0.95)">E</text>
<defs><radialGradient id="gGl" cx="0.5" cy="0.5" r="0.5"><stop offset="0" stop-color="#9ea2a6" stop-opacity="0.45"/><stop offset="1" stop-color="#9ea2a6" stop-opacity="0"/></radialGradient></defs>
<ellipse cx="1812" cy="338" rx="36" ry="40" fill="url(#gGl)" />
<path d="M1789.7 326.7L1817 309.5L1851.4 301.2L1823.2 319.7z" fill="#9da0a3" />
<path d="M1789.7 326.7L1823.2 319.7L1843.5 366.4L1808.2 370z" fill="#a6a9ab" />
<path d="M1823.2 319.7L1851.4 301.2L1868.2 343.5L1843.5 366.4z" fill="#b0b3b5" />
<path d="M1822 329L1833 324.5L1845 351L1834 356z" fill="#a3a7b2" stroke="none" stroke-width="1" opacity="0.8"/>
<line x1="1823.2" y1="319.7" x2="1843.5" y2="366.4" stroke="#5a5e66" stroke-width="0.8" stroke-dasharray="5 2"/>
<text x="0" y="0" font-size="9" font-weight="bold" fill="#50555e" transform="translate(1808 336.5) rotate(64) skewX(-8)" textLength="26" lengthAdjust="spacingAndGlyphs">BACK</text>
<text x="0" y="0" font-size="8.5" font-weight="bold" fill="#50555e" transform="translate(1855 343.5) rotate(-112) skewX(10)" textLength="19" lengthAdjust="spacingAndGlyphs">TOP</text>
<line x1="1911" y1="253" x2="1750" y2="367.3" stroke="#10e810" stroke-width="1" shape-rendering="crispEdges"/>
<rect x="1791" y="424.8" width="76" height="20" fill="#8a8d9c" rx="4" stroke="#9ea1ae" stroke-width="1"/>
<text x="1795.5" y="438.8" font-size="13" fill="#595d69" textLength="49.0" lengthAdjust="spacingAndGlyphs" >parábola</text>
<path d="M1852.5 431.5H1862L1857.2 436.8z" fill="#999cac" stroke="#aeb1bf" stroke-width="1" />
<rect x="1869" y="475.8" width="40" height="259" fill="#5e6369" rx="3.5" stroke="#7b7f85" stroke-width="1"/>
<circle cx="1901.8" cy="482" r="3.6" fill="none" stroke="#4c5157" stroke-width="1.2" />
<path d="M1899.8 480L1903.8 484M1903.8 480L1899.8 484" fill="None" stroke="#4c5157" stroke-width="1" />
<path d="M1875 510.5a14 14 0 0 1 14 -14h13.5v14a13.8 13.8 0 0 1 -27.5 0z" fill="none" stroke="#4c5157" stroke-width="1.5" />
<circle cx="1889" cy="510" r="8.2" fill="none" stroke="#4c5157" stroke-width="1.4" />
<path d="M1882.5 515.5Q1889 521 1895.5 515.5" fill="None" stroke="#4c5157" stroke-width="1.2" />
<line x1="1884" y1="517" x2="1880" y2="521.5" stroke="#4c5157" stroke-width="1.2" />
<line x1="1894" y1="517" x2="1898" y2="521.5" stroke="#4c5157" stroke-width="1.2" />
<path d="M1886.0 535.0999999999999h6l-3.0 3.4z" fill="#4c5157"/>
<line x1="1871" y1="545" x2="1907" y2="545" stroke="#565b61" stroke-width="1" />
<path d="M1881.5 570c-3 -4 -6 -8 -4.5 -9.5s4 1 6 3.5v-10.5c0 -2.4 3.2 -2.4 3.2 0v-3c0 -2.4 3.4 -2.4 3.4 0v3c0 -2.2 3.2 -2.2 3.2 0.4v3c0 -2 3 -2 3 0.6v9c0 5 -2.5 9 -7.5 9s-7.5 -2 -9.8 -5.5z" fill="none" stroke="#4c5157" stroke-width="1.5" />
<path d="M1874.5 585L1888 598.5M1888 585L1874.5 598.5" fill="None" stroke="#4c5157" stroke-width="1.6" />
<path d="M1874 584.5h5l-5 5z" fill="#4c5157" />
<path d="M1888.5 584.5h-5l5 5z" fill="#4c5157" />
<path d="M1874 599h5l-5 -5z" fill="#4c5157" />
<circle cx="1893" cy="603" r="6" fill="none" stroke="#4c5157" stroke-width="1.8" />
<line x1="1897.5" y1="607.5" x2="1902.5" y2="612.5" stroke="#4c5157" stroke-width="2.6" stroke-linecap="round"/>
<path d="M1886.0 621.5h6l-3.0 3.4z" fill="#4c5157"/>
<ellipse cx="1889" cy="648" rx="13" ry="5.6" fill="none" stroke="#4c5157" stroke-width="1.5" />
<path d="M1885.8 658V640.5H1882.5L1889 632.5L1895.5 640.5H1892.2V658z" fill="#5e6369" stroke="#4c5157" stroke-width="1.4" />
<path d="M1878.5 655l6 -3.4v6.4z" fill="#4c5157" />
<path d="M1886.0 668.5h6l-3.0 3.4z" fill="#4c5157"/>
<line x1="1871" y1="678" x2="1907" y2="678" stroke="#565b61" stroke-width="1" />
<rect x="1874.5" y="684.5" width="8" height="6.6" fill="none" stroke="#4c5157" stroke-width="1.3"/>
<rect x="1884.6" y="684.5" width="8" height="6.6" fill="none" stroke="#4c5157" stroke-width="1.3"/>
<rect x="1894.7" y="684.5" width="8" height="6.6" fill="none" stroke="#4c5157" stroke-width="1.3"/>
<rect x="1874.5" y="695" width="20.5" height="16" fill="none" stroke="#4c5157" stroke-width="1.4"/>
<path d="M1880.5 698.5V707.5L1889.5 703z" fill="#4c5157" />
<circle cx="1901.8" cy="727.3" r="3.6" fill="none" stroke="#4c5157" stroke-width="1.2" />
<path d="M1899.6 727.3h4.4l-2.2 2.4z" fill="#4c5157" />
<line x1="25.1" y1="196.2" x2="16.3" y2="215.9" stroke="#4c5464" stroke-width="1.2" />
<text x="35.4" y="211.8" font-size="15.5" fill="#e6e6e6" textLength="30.8" lengthAdjust="spacingAndGlyphs" >Start</text>
<text x="96.2" y="211.8" font-size="15.5" fill="#ffffff" font-weight="bold" textLength="57.3" lengthAdjust="spacingAndGlyphs" >cónicas*</text>
<path d="M165.5 201.8L174.5 210.8M174.5 201.8L165.5 210.8" fill="None" stroke="#b9bdc5" stroke-width="2" />
<path d="M209 198.2V213.8M201.2 206H216.8" fill="None" stroke="#f2f2f2" stroke-width="2.2" />
<line x1="237.7" y1="196.2" x2="230" y2="215.9" stroke="#4c5464" stroke-width="1.2" />
<path d="M491.8 907H424a4 4 0 0 0 -4 4V936a4 4 0 0 0 4 4H491.8z" fill="#272e3b" />
<rect x="425" y="913.3" width="1.8" height="1.6" fill="#d4d4d4" />
<rect x="429.4" y="913.3" width="1.8" height="1.6" fill="#d4d4d4" />
<rect x="425" y="916.15" width="1.8" height="1.6" fill="#d4d4d4" />
<rect x="429.4" y="916.15" width="1.8" height="1.6" fill="#d4d4d4" />
<rect x="425" y="919.0" width="1.8" height="1.6" fill="#d4d4d4" />
<rect x="429.4" y="919.0" width="1.8" height="1.6" fill="#d4d4d4" />
<rect x="425" y="921.8499999999999" width="1.8" height="1.6" fill="#d4d4d4" />
<rect x="429.4" y="921.8499999999999" width="1.8" height="1.6" fill="#d4d4d4" />
<rect x="425" y="924.6999999999999" width="1.8" height="1.6" fill="#d4d4d4" />
<rect x="429.4" y="924.6999999999999" width="1.8" height="1.6" fill="#d4d4d4" />
<rect x="425" y="927.55" width="1.8" height="1.6" fill="#d4d4d4" />
<rect x="429.4" y="927.55" width="1.8" height="1.6" fill="#d4d4d4" />
<rect x="425" y="930.4" width="1.8" height="1.6" fill="#d4d4d4" />
<rect x="429.4" y="930.4" width="1.8" height="1.6" fill="#d4d4d4" />
<rect x="425" y="933.25" width="1.8" height="1.6" fill="#d4d4d4" />
<rect x="429.4" y="933.25" width="1.8" height="1.6" fill="#d4d4d4" />
<path d="M440 917.5L449.8 927.3M449.8 917.5L440 927.3" fill="None" stroke="#d6d6d6" stroke-width="2" />
<path d="M468.5 930.5L479 920" fill="None" stroke="#c4c4c4" stroke-width="3.2" stroke-linecap="round"/>
<path d="M483.8 914.2a5 5 0 1 0 2 5.2l-3.6 0.6l-2 -2.6l1.4 -3z" fill="#c4c4c4" />
<rect x="491.8" y="908" width="1004.5" height="32" fill="#c0c1c3" rx="3"/>
<line x1="988.1" y1="908" x2="945.8" y2="938" stroke="#8ae88a" stroke-width="1" opacity="0.9"/>
<rect x="497.5" y="916.3" width="19" height="14.6" fill="#c0c1c3" stroke="#5e5e5e" stroke-width="1.1"/>
<rect x="497.5" y="916.3" width="19" height="3.2" fill="#5e5e5e" />
<path d="M500 922.5l3.4 2l-3.4 2" fill="None" stroke="#5e5e5e" stroke-width="0.9" />
<line x1="504.5" y1="927.3" x2="508.5" y2="927.3" stroke="#5e5e5e" stroke-width="0.9" />
<path d="M519.5 922.0h9.4l-4.7 5z" fill="#5e5e5e"/>
<text x="538.6" y="928.8" font-size="14.8" fill="#6d6d6d" font-style="italic" style='font-family:"Liberation Mono",monospace' textLength="124.6" lengthAdjust="spacingAndGlyphs" >Type a command</text>
<path d="M1481 927.8h9.2l-4.6 -5.2z" fill="#5e5e5e" />
<text x="35.4" y="966.6" font-size="15.5" fill="#ffffff" font-weight="bold" textLength="43.8" lengthAdjust="spacingAndGlyphs" >Model</text>
<text x="109" y="966.6" font-size="15.5" fill="#e6e6e6" textLength="31.6" lengthAdjust="spacingAndGlyphs" >A3rd</text>
<line x1="160" y1="951" x2="152" y2="970.7" stroke="#4c5464" stroke-width="1.2" />
<line x1="210" y1="951" x2="202" y2="970.7" stroke="#4c5464" stroke-width="1.2" />
<path d="M181 953.7V968.7M173.4 961.2H188.6" fill="None" stroke="#f2f2f2" stroke-width="2.2" />
<rect x="1170" y="983" width="59" height="30" fill="#3b4453" />
<rect x="1232" y="983" width="80" height="30" fill="#3b4453" />
<rect x="1315" y="983" width="30" height="30" fill="#3b4453" />
<rect x="1346" y="983" width="130" height="30" fill="#3b4453" />
<rect x="1478" y="983" width="79" height="30" fill="#3b4453" />
<rect x="1560.5" y="983" width="131.5" height="30" fill="#3b4453" />
<rect x="1695" y="983" width="50" height="30" fill="#3b4453" />
<rect x="1746.3" y="983" width="29.700000000000045" height="30" fill="#3b4453" />
<rect x="1779" y="983" width="31" height="30" fill="#3b4453" />
<rect x="1813" y="983" width="34" height="30" fill="#3b4453" />
<rect x="1850" y="983" width="60" height="30" fill="#3b4453" />
<rect x="1478" y="983.5" width="28" height="29" fill="#6393ca" />
<rect x="1508" y="983.5" width="28" height="29" fill="#6393ca" />
<rect x="1560.5" y="983.5" width="28.5" height="29" fill="#6393ca" />
<text x="1174.6" y="1003.6" font-size="15.5" fill="#f2f2f2" textLength="50.4" lengthAdjust="spacingAndGlyphs" >MODEL</text>
<line x1="1241.2" y1="987.6" x2="1241.2" y2="1007" stroke="#e2e2e2" stroke-width="1.2" />
<line x1="1237" y1="991.8" x2="1256.4" y2="991.8" stroke="#e2e2e2" stroke-width="1.2" />
<line x1="1246.6000000000001" y1="987.6" x2="1246.6000000000001" y2="1007" stroke="#e2e2e2" stroke-width="1.2" />
<line x1="1237" y1="997.1999999999999" x2="1256.4" y2="997.1999999999999" stroke="#e2e2e2" stroke-width="1.2" />
<line x1="1252.0" y1="987.6" x2="1252.0" y2="1007" stroke="#e2e2e2" stroke-width="1.2" />
<line x1="1237" y1="1002.5999999999999" x2="1256.4" y2="1002.5999999999999" stroke="#e2e2e2" stroke-width="1.2" />
<rect x="1269.3" y="990.0" width="2.8" height="2.8" fill="#e2e2e2" />
<rect x="1275.5" y="990.0" width="2.8" height="2.8" fill="#e2e2e2" />
<rect x="1281.7" y="990.0" width="2.8" height="2.8" fill="#e2e2e2" />
<rect x="1269.3" y="996.2" width="2.8" height="2.8" fill="#e2e2e2" />
<rect x="1275.5" y="996.2" width="2.8" height="2.8" fill="#e2e2e2" />
<rect x="1281.7" y="996.2" width="2.8" height="2.8" fill="#e2e2e2" />
<rect x="1269.3" y="1002.4" width="2.8" height="2.8" fill="#e2e2e2" />
<rect x="1275.5" y="1002.4" width="2.8" height="2.8" fill="#e2e2e2" />
<rect x="1281.7" y="1002.4" width="2.8" height="2.8" fill="#e2e2e2" />
<path d="M1297.0 995.0h10.4l-5.2 5.6z" fill="#e2e2e2"/>
<path d="M1325 988.5V997.5M1320.5 993H1329.5" fill="None" stroke="#e2e2e2" stroke-width="1.1" />
<rect x="1327.8" y="1000.3" width="11.6" height="4.4" fill="#e2e2e2" />
<rect x="1329.2" y="1001.6" width="3" height="1.8" fill="#3b4453" />
<path d="M1351.8 988.5V1007.3H1371" fill="None" stroke="#e2e2e2" stroke-width="1.2" />
<path d="M1351.8 1002.3H1357V1007.3" fill="None" stroke="#e2e2e2" stroke-width="1" />
<circle cx="1389.5" cy="997.8" r="8.4" fill="none" stroke="#e2e2e2" stroke-width="1.2" />
<path d="M1398.5 989L1389.5 997.8H1401" fill="None" stroke="#e2e2e2" stroke-width="1.1" />
<path d="M1410.8 995.0h10.4l-5.2 5.6z" fill="#e2e2e2"/>
<line x1="1441.3" y1="988" x2="1441.3" y2="1006" stroke="#3fd05a" stroke-width="1.1" />
<line x1="1434" y1="990" x2="1448.5" y2="1005" stroke="#e04a4a" stroke-width="1.1" />
<rect x="1439.8" y="995.3" width="3" height="3" fill="#3b4453" stroke="#e8e8e8" stroke-width="0.9"/>
<path d="M1460.8 995.0h10.4l-5.2 5.6z" fill="#e2e2e2"/>
<path d="M1482.5 1005.2H1502M1482.5 1005.2L1499.5 989.5" fill="None" stroke="#f2f2f2" stroke-width="1.2" />
<rect x="1487.8" y="996" width="3.6" height="3.6" fill="#f2f2f2" />
<rect x="1514.5" y="992.5" width="17" height="15" fill="none" stroke="#f2f2f2" stroke-width="1.2"/>
<rect x="1511" y="988.8" width="5" height="5" fill="#6393ca" stroke="#f2f2f2" stroke-width="1.1"/>
<path d="M1542.2 995.0h10.4l-5.2 5.6z" fill="#e2e2e2"/>
<path d="M1573 988.7Q1574.6 997.5 1581.6 1008.1Q1576.0 1005.1 1573 1001.9Q1570.0 1005.1 1564.4 1008.1Q1571.4 997.5 1573 988.7z" fill="#ffffff" stroke="#ffffff" stroke-width="0.5" stroke-linejoin="round"/>
<circle cx="1581.5" cy="991.6" r="2.6" fill="none" stroke="#ffffff" stroke-width="1.1" />
<path d="M1602.5 989.69Q1604.02 998.05 1610.67 1008.12Q1605.35 1005.27 1602.5 1002.23Q1599.65 1005.27 1594.33 1008.12Q1600.98 998.05 1602.5 989.69z" fill="#d4d4d4" stroke="#d4d4d4" stroke-width="0.5" stroke-linejoin="round"/>
<path d="M1611.5 988.5l-3.4 4.6h2.4l-1.6 3.8l4.4 -5h-2.4z" fill="#d4d4d4" />
<path d="M1634.3 989.69Q1635.82 998.05 1642.47 1008.12Q1637.1499999999999 1005.27 1634.3 1002.23Q1631.45 1005.27 1626.1299999999999 1008.12Q1632.78 998.05 1634.3 989.69z" fill="#d4d4d4" stroke="#d4d4d4" stroke-width="0.5" stroke-linejoin="round"/>
<text x="1656.2" y="1003.6" font-size="15.5" fill="#f2f2f2" textLength="15.8" lengthAdjust="spacingAndGlyphs">1:1</text>
<path d="M1677.0 995.0h10l-5.0 5.6z" fill="#e2e2e2"/>
<rect x="1707.8" y="988" width="4" height="20" fill="#e2e2e2" transform="rotate(0 1709.8 998)"/>
<rect x="1707.8" y="988" width="4" height="20" fill="#e2e2e2" transform="rotate(45 1709.8 998)"/>
<rect x="1707.8" y="988" width="4" height="20" fill="#e2e2e2" transform="rotate(90 1709.8 998)"/>
<rect x="1707.8" y="988" width="4" height="20" fill="#e2e2e2" transform="rotate(135 1709.8 998)"/>
<rect x="1707.8" y="988" width="4" height="20" fill="#e2e2e2" transform="rotate(180 1709.8 998)"/>
<rect x="1707.8" y="988" width="4" height="20" fill="#e2e2e2" transform="rotate(225 1709.8 998)"/>
<rect x="1707.8" y="988" width="4" height="20" fill="#e2e2e2" transform="rotate(270 1709.8 998)"/>
<rect x="1707.8" y="988" width="4" height="20" fill="#e2e2e2" transform="rotate(315 1709.8 998)"/>
<circle cx="1709.8" cy="998" r="7.2" fill="#e2e2e2" />
<circle cx="1709.8" cy="998" r="3.4" fill="#3b4453" />
<path d="M1729.8 995.0h10.4l-5.2 5.6z" fill="#e2e2e2"/>
<path d="M1760.7 988.2V1007.8M1751 998H1770.4" fill="None" stroke="#f2f2f2" stroke-width="2.4" />
<rect x="1784.5" y="988.5" width="7" height="7" fill="none" stroke="#e2e2e2" stroke-width="1.1"/>
<circle cx="1800.5" cy="996.5" r="4" fill="none" stroke="#e2e2e2" stroke-width="1.1" />
<path d="M1792.5 1000.5L1797 1008.2H1788z" fill="none" stroke="#e2e2e2" stroke-width="1.1" />
<path d="M1818.5 993L1829 987.5L1837 993V1004H1818.5z" fill="#3f7fd0" />
<rect x="1817.5" y="999" width="14" height="8" fill="#f0b73a" />
<path d="M1824.5 985V997M1820 990.5H1829.5" fill="None" stroke="#e8f0ff" stroke-width="1.1" />
<circle cx="1824.7" cy="990.5" r="2.8" fill="none" stroke="#e8f0ff" stroke-width="0.9" />
<path d="M1827.5 1003.5L1832.5 1008.5L1842 998.5" fill="None" stroke="#3fc04f" stroke-width="3" />
<rect x="1855.5" y="990" width="19" height="15.4" fill="none" stroke="#e2e2e2" stroke-width="1.2"/>
<path d="M1859.5 1001L1863 997.5M1870.5 994L1867 997.5" fill="None" stroke="#e2e2e2" stroke-width="1" />
<path d="M1858.3 1002.4v-3.4l3.4 3.4zM1871.7 992.6v3.4l-3.4 -3.4z" fill="#e2e2e2" />
<rect x="1885" y="988.3" width="20.4" height="2.6" fill="#f2f2f2" />
<rect x="1885" y="996.5999999999999" width="20.4" height="2.6" fill="#f2f2f2" />
<rect x="1885" y="1004.8" width="20.4" height="2.6" fill="#f2f2f2" />
</svg>
</body></html>
